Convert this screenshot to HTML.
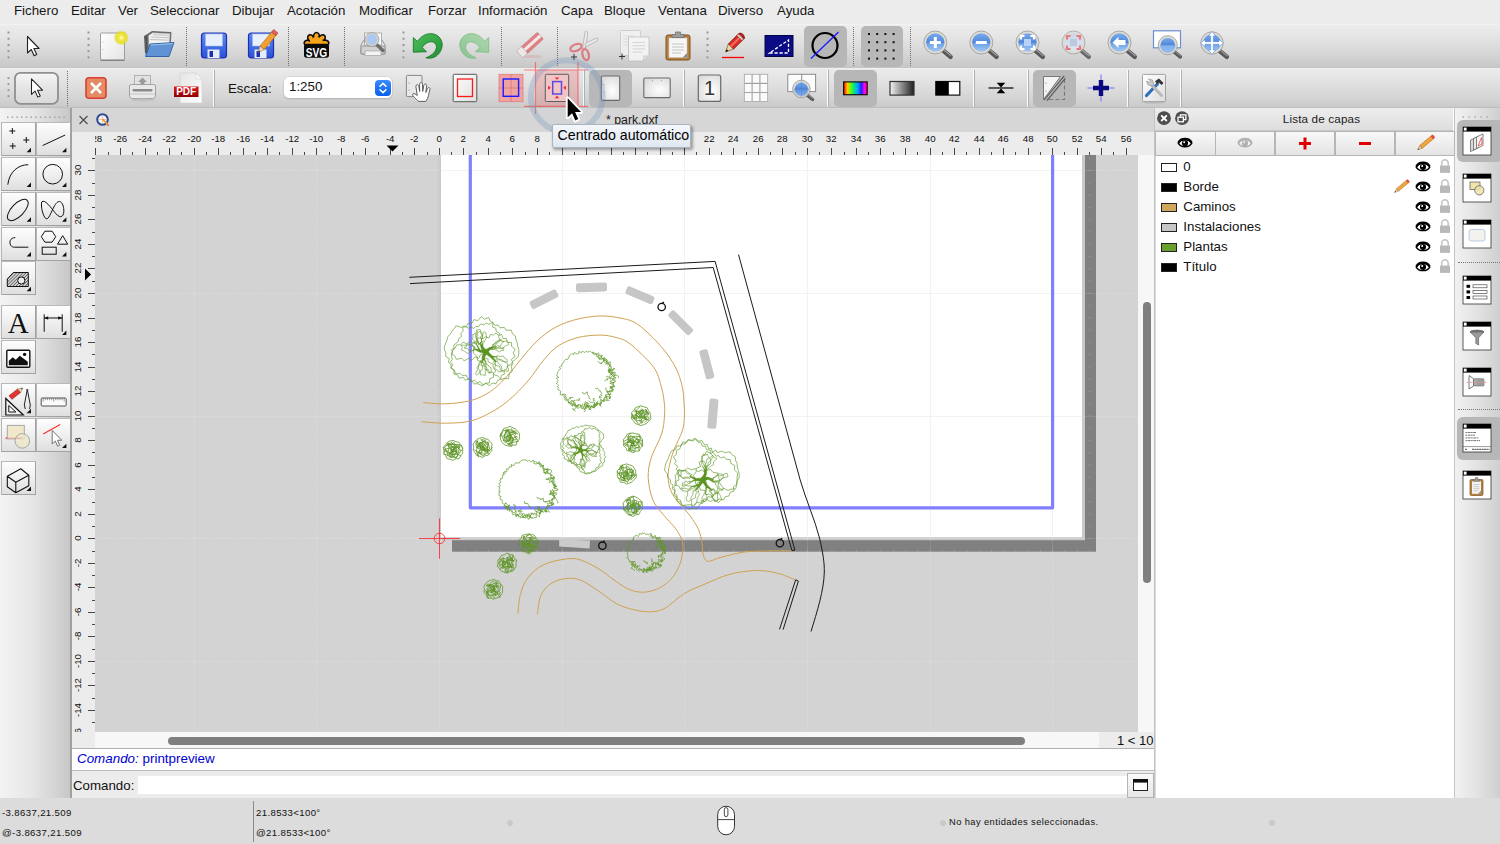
<!DOCTYPE html><html lang="es"><head><meta charset="utf-8"><title>park.dxf</title><style>
*{box-sizing:border-box;margin:0;padding:0}
html,body{width:1500px;height:844px;overflow:hidden;background:#dcdcdc;font-family:"Liberation Sans",sans-serif;color:#000}
.abs{position:absolute}
#root{position:relative;width:1500px;height:844px;overflow:hidden}
#menubar{left:0;top:0;width:1500px;height:24px;background:#ececec}
#menubar span{position:absolute;top:2px;font-size:13.3px;line-height:17px;color:#161616;white-space:nowrap}
#tb1{left:0;top:24px;width:1500px;height:44px;background:linear-gradient(#f6f6f6 0%,#ececec 3%,#e3e3e3 35%,#d4d4d4 72%,#c8c8c8 97%,#c2c2c2 100%)}
#tb2{left:0;top:68px;width:1500px;height:40px;background:linear-gradient(#f2f2f2 0%,#eaeaea 4%,#e2e2e2 35%,#d5d5d5 72%,#cbcbcb 96%,#b8b8b8 100%)}
#lefttb{left:0;top:108px;width:72px;height:690px;background:linear-gradient(90deg,#f3f3f3 0%,#e6e6e6 45%,#c8c8c8 96.5%,#9c9c9c 97.5%,#a4a4a4 100%)}
#tabbar{left:72px;top:108px;width:1082px;height:24px;background:#d6d6d6}
#rulerbg{left:72px;top:132px;width:1082px;height:617px;background:#ececec}
#canvas{left:95px;top:155px;width:1043px;height:577px;background:#d3d3d3;overflow:hidden}
#vscroll{left:1138px;top:155px;width:16px;height:577px;background:#f7f7f7}
#hscroll{left:95px;top:732px;width:1004px;height:17px;background:#f7f7f7}
#cmdhist{left:72px;top:748px;width:1081.5px;height:23px;background:#fff;border-top:1px solid #b0b0b0;border-bottom:1px solid #bcbcbc}
#cmdline{left:72px;top:771px;width:1083px;height:27px;background:#ececec}
#status{left:0;top:798px;width:1500px;height:46px;background:#dcdcdc}
#status span{position:absolute;font-size:9.6px;letter-spacing:0.37px;color:#111;white-space:nowrap;line-height:13px}
#layers{left:1154px;top:108px;width:301px;height:690px;background:#fff;border-left:1px solid #c4c4c4;border-right:1px solid #c4c4c4}
#rightdock{left:1455px;top:108px;width:45px;height:690px;background:linear-gradient(90deg,#f1f1f1 0%,#e4e4e4 45%,#cfcfcf 100%)}
.sepv{position:absolute;width:0;border-left:1px dotted #6e6e6e}
.sepline{position:absolute;width:2px;background:linear-gradient(90deg,#fcfcfc 50%,#b0b0b0 50%)}
.hl{position:absolute;background:#b7b7b7;border-radius:5px}
svg{position:absolute;overflow:visible;left:0;top:0}
svg text{font-family:"Liberation Sans",sans-serif}
.lbtn{position:absolute;background:linear-gradient(#fdfdfd 0%,#f1f1f1 45%,#dfdfdf 100%);border:1.2px solid #a2a2a2;border-top-color:#b9b9b9;border-left-color:#b4b4b4}
.lrow{position:absolute;left:0;width:298px;height:20px}
.lrow i{position:absolute;left:5.8px;top:5.5px;width:16.5px;height:9.4px;border:1px solid #222}
.lrow b{position:absolute;left:28.3px;top:1px;font-weight:normal;font-size:13.3px;line-height:18px;color:#111}
.lbt{position:absolute;top:23px;height:25px;background:linear-gradient(#f8f8f8,#e4e4e4);border:1.4px solid #b6b6b6}
</style></head><body><div id="root">
<div id="menubar" class="abs">
<span style="left:14px">Fichero</span>
<span style="left:71px">Editar</span>
<span style="left:118px">Ver</span>
<span style="left:150px">Seleccionar</span>
<span style="left:232px">Dibujar</span>
<span style="left:287px">Acotación</span>
<span style="left:359px">Modificar</span>
<span style="left:428px">Forzar</span>
<span style="left:478px">Información</span>
<span style="left:561px">Capa</span>
<span style="left:604px">Bloque</span>
<span style="left:658px">Ventana</span>
<span style="left:718px">Diverso</span>
<span style="left:777px">Ayuda</span>
</div>
<div id="tb1" class="abs"></div>
<div id="tb2" class="abs"></div>
<div class="hl" style="left:804px;top:26px;width:43px;height:41px"></div>
<div class="hl" style="left:861px;top:26px;width:42px;height:41px"></div>
<div class="hl" style="left:589px;top:70px;width:43px;height:37px"></div>
<div class="hl" style="left:834px;top:70px;width:43px;height:37px"></div>
<div class="hl" style="left:1033px;top:70px;width:43px;height:37px"></div>
<svg width="4" height="30" style="left:7px;top:31px"><path d="M1.5 0.6 V28" stroke="#929292" stroke-width="1.9" stroke-dasharray="1.9 4.3"/></svg>
<svg width="4" height="30" style="left:87px;top:31px"><path d="M1.5 0.6 V28" stroke="#929292" stroke-width="1.9" stroke-dasharray="1.9 4.3"/></svg>
<svg width="4" height="30" style="left:402px;top:31px"><path d="M1.5 0.6 V28" stroke="#929292" stroke-width="1.9" stroke-dasharray="1.9 4.3"/></svg>
<svg width="4" height="30" style="left:706px;top:31px"><path d="M1.5 0.6 V28" stroke="#929292" stroke-width="1.9" stroke-dasharray="1.9 4.3"/></svg>
<div class="sepv" style="left:186px;top:27px;height:39px"></div>
<div class="sepv" style="left:288px;top:27px;height:39px"></div>
<div class="sepv" style="left:344px;top:27px;height:39px"></div>
<div class="sepv" style="left:501px;top:27px;height:39px"></div>
<div class="sepv" style="left:557px;top:27px;height:39px"></div>
<div class="sepv" style="left:853px;top:27px;height:39px"></div>
<div class="sepv" style="left:910px;top:27px;height:39px"></div>
<svg width="4" height="30" style="left:7px;top:76px"><path d="M1.5 1.2 V24" stroke="#929292" stroke-width="1.9" stroke-dasharray="1.9 4.1"/></svg>
<div class="sepv" style="left:67px;top:71px;height:35px"></div>
<div class="sepline" style="left:213px;top:70px;height:37px"></div>
<div class="sepline" style="left:583px;top:70px;height:37px"></div>
<div class="sepline" style="left:683px;top:70px;height:37px"></div>
<div class="sepline" style="left:827px;top:70px;height:37px"></div>
<div class="sepline" style="left:973px;top:70px;height:37px"></div>
<div class="sepline" style="left:1027px;top:70px;height:37px"></div>
<div class="sepline" style="left:1127px;top:70px;height:37px"></div>
<div class="sepline" style="left:1180px;top:70px;height:37px"></div>
<svg width="1500" height="110" viewBox="0 0 1500 110"><defs><linearGradient id="lensg" x1="0" y1="0" x2="0" y2="1"><stop offset="0" stop-color="#7fb0ee"/><stop offset="0.5" stop-color="#4f86d9"/><stop offset="0.55" stop-color="#6fa2e6"/><stop offset="1" stop-color="#a9cbf5"/></linearGradient><linearGradient id="lensp" x1="0" y1="0" x2="0" y2="1"><stop offset="0" stop-color="#c6d4ea"/><stop offset="1" stop-color="#dfe8f5"/></linearGradient></defs><defs><linearGradient id="pgr" x1="0" y1="0" x2="1" y2="1"><stop offset="0" stop-color="#ffffff"/><stop offset="1" stop-color="#dedede"/></linearGradient><radialGradient id="pgc" cx="0.6" cy="0.6" r="0.7"><stop offset="0" stop-color="#ffffff"/><stop offset="1" stop-color="#dcdcdc"/></radialGradient></defs><g transform="translate(33.5,46.5)" ><g transform="translate(-6,-10)"><path transform="scale(1.0)" d="M0 0 L0 16.5 L3.8 13 L6.6 19.3 L9.2 18.1 L6.4 12 L11.6 12 Z" fill="#fff" stroke="#222" stroke-width="1.1" stroke-linejoin="round" /></g></g><g transform="translate(112,45)" ><defs><radialGradient id="glow"><stop offset="0" stop-color="#fffde0"/><stop offset="0.35" stop-color="#f2ea3a"/><stop offset="0.75" stop-color="#e6dc28" stop-opacity="0.85"/><stop offset="1" stop-color="#e0d820" stop-opacity="0"/></radialGradient><linearGradient id="pg" x1="0" y1="0" x2="1" y2="1"><stop offset="0" stop-color="#ffffff"/><stop offset="1" stop-color="#e4e4e4"/></linearGradient></defs><rect x="-11.5" y="-12" width="24" height="27" rx="1" fill="url(#pg)" stroke="#9e9e9e" stroke-width="1"/><path d="M-11.5 15.3 H12.5" stroke="#777" stroke-width="1"/><circle cx="-9" cy="-3" r="0.45" fill="#999"/><circle cx="-9" cy="4.5" r="0.45" fill="#999"/><circle cx="9.3" cy="-7.2" r="7.6" fill="url(#glow)"/></g><g transform="translate(158,45)" ><path d="M-14 -9 L-11 -10.5 L-11 10 L-13 8 Z" fill="#5a5a5a"/><path d="M-11.5 -10 L-6 -13.5 L13 -12.5 L12 3 L-11 9 Z" fill="#6a6a6a" stroke="#4a4a4a" stroke-width="0.7"/><path d="M-9.5 -9.5 L-5.5 -12.3 L12 -11.5 L11.5 -2 L-9 6 Z" fill="#f2f2f2" stroke="#9a9a9a" stroke-width="0.6"/><path d="M-5 -10.3 L11.5 -9.6 M-7 -8 L11.5 -7.3 M-8 -5.5 L11.5 -4.8" stroke="#b9b9b9" stroke-width="0.9"/><path d="M-12.5 11.5 L-8 -1 L16 -2.5 L11 11.5 Z" fill="#5f93d4" stroke="#3565a8" stroke-width="1"/><path d="M-7.3 0 L15 -1.4" stroke="#9fc3ec" stroke-width="1"/></g><g transform="translate(214,45.5)" ><defs><linearGradient id="fl" x1="0" y1="0" x2="0" y2="1"><stop offset="0" stop-color="#5f8cf0"/><stop offset="1" stop-color="#2a52d8"/></linearGradient></defs><rect x="-12.5" y="-12.5" width="25" height="25" rx="3" fill="url(#fl)" stroke="#1c2fb0" stroke-width="1.2"/><rect x="-8.5" y="-11.5" width="17" height="12" fill="#e8f0ff" stroke="#9db8f0" stroke-width="0.6"/><rect x="-6.5" y="4" width="12" height="8.5" fill="#e6ecfa"/><rect x="-4.5" y="5.5" width="3.5" height="6" fill="#1c2fb0"/></g><g transform="translate(261,45.5)" ><defs><linearGradient id="fl" x1="0" y1="0" x2="0" y2="1"><stop offset="0" stop-color="#5f8cf0"/><stop offset="1" stop-color="#2a52d8"/></linearGradient></defs><rect x="-12.5" y="-12.5" width="25" height="25" rx="3" fill="url(#fl)" stroke="#1c2fb0" stroke-width="1.2"/><rect x="-8.5" y="-11.5" width="17" height="12" fill="#e8f0ff" stroke="#9db8f0" stroke-width="0.6"/><rect x="-6.5" y="4" width="12" height="8.5" fill="#e6ecfa"/><rect x="-4.5" y="5.5" width="3.5" height="6" fill="#1c2fb0"/><g transform="rotate(40 6 -4)"><rect x="3.5" y="-16" width="5.5" height="20" fill="#f0a030" stroke="#b86a10" stroke-width="0.6"/><rect x="3.5" y="-17.5" width="5.5" height="3.5" fill="#e06060" stroke="#a03030" stroke-width="0.5"/><path d="M3.5 4 L6.25 10 L9 4 Z" fill="#f0d8b0" stroke="#8a6a40" stroke-width="0.5"/><path d="M5.4 8 L6.25 10 L7.1 8 Z" fill="#333"/></g></g><g transform="translate(316,46)" ><g transform="translate(0.5,0)"><g fill="#f7a41d" stroke="#0a0a0a" stroke-width="1.7"><ellipse cx="0" cy="-8.6" rx="3.1" ry="4.9" transform="rotate(-78 0 -1)"/><ellipse cx="0" cy="-8.6" rx="3.1" ry="4.9" transform="rotate(-39 0 -1)"/><ellipse cx="0" cy="-8.6" rx="3.1" ry="4.9" transform="rotate(0 0 -1)"/><ellipse cx="0" cy="-8.6" rx="3.1" ry="4.9" transform="rotate(39 0 -1)"/><ellipse cx="0" cy="-8.6" rx="3.1" ry="4.9" transform="rotate(78 0 -1)"/></g><circle cx="0" cy="-1.5" r="7.4" fill="#f7a41d"/><rect x="-12.5" y="-2.3" width="25" height="14" rx="2.6" fill="#0a0a0a"/><text x="0" y="10.8" text-anchor="middle" font-size="12.6" font-weight="bold" fill="#fff" textLength="21.5" lengthAdjust="spacingAndGlyphs">SVG</text></g></g><g transform="translate(373,45)" ><path d="M-12 0 L-9 -5 H9 L12 0 V9 H-12 Z" fill="#e4e4e4" stroke="#8c8c8c" stroke-width="0.9"/><rect x="-12" y="1" width="24" height="8" rx="1.5" fill="#d2d2d2" stroke="#8c8c8c" stroke-width="0.9"/><rect x="-8.5" y="-12" width="17" height="12" fill="#fafafa" stroke="#a0a0a0" stroke-width="0.8"/><rect x="-8" y="6" width="16" height="4.5" fill="#f4f4f4" stroke="#9a9a9a" stroke-width="0.6"/><path d="M3 -1 L10 5.5" stroke="#6e6e6e" stroke-width="3.5" stroke-linecap="round"/><circle cx="-1" cy="-5.5" r="6" fill="#a9c9f2" stroke="#d0d0d0" stroke-width="1.8"/><circle cx="-1" cy="-5.5" r="7" fill="none" stroke="#8e8e8e" stroke-width="0.6"/></g><g transform="translate(428,45.5)" ><defs><linearGradient id="ug1" x1="0" y1="0" x2="1" y2="1"><stop offset="0" stop-color="#4fbf5b"/><stop offset="1" stop-color="#1f8f33"/></linearGradient></defs><g transform="" opacity="1.0"><path d="M-14.7 -7.9 L-14.7 6.7 L-1.5 6.2 L-5.9 2.1 C-3 -2.5 2 -5 5.9 -3.1 C9.5 -1 9.5 4.5 4.4 8.7 C2 10.5 0 11.5 -2.2 12.3 C3 13.5 7.5 12 10.5 8.5 C14.5 4 15 -2 13.2 -5.3 C11 -10 7 -11.8 2.5 -11.8 C-2.5 -11.8 -7 -9 -10.6 -4.1 Z" fill="url(#ug1)" stroke="#167a28" stroke-width="0.9" stroke-linejoin="round"/></g></g><g transform="translate(474,45.5)" ><defs><linearGradient id="ug2" x1="0" y1="0" x2="1" y2="1"><stop offset="0" stop-color="#a5d6a7"/><stop offset="1" stop-color="#7cc083"/></linearGradient></defs><g transform="scale(-1,1)" opacity="0.85"><path d="M-14.7 -7.9 L-14.7 6.7 L-1.5 6.2 L-5.9 2.1 C-3 -2.5 2 -5 5.9 -3.1 C9.5 -1 9.5 4.5 4.4 8.7 C2 10.5 0 11.5 -2.2 12.3 C3 13.5 7.5 12 10.5 8.5 C14.5 4 15 -2 13.2 -5.3 C11 -10 7 -11.8 2.5 -11.8 C-2.5 -11.8 -7 -9 -10.6 -4.1 Z" fill="url(#ug2)" stroke="#6fb878" stroke-width="0.9" stroke-linejoin="round"/></g></g><g transform="translate(530,45)" ><g opacity="0.62"><ellipse cx="2" cy="11.5" rx="10" ry="1.6" fill="#d9b0b0"/><g transform="rotate(-42)"><rect x="-14" y="-4.6" width="28" height="9.2" rx="1.2" fill="#e0474f" stroke="#c0353d" stroke-width="0.6"/><rect x="-8" y="-1.6" width="22" height="3.2" fill="#fbeeee"/><rect x="-14" y="-4.6" width="6.5" height="9.2" rx="1.2" fill="#f7f3f3" stroke="#bdb4b4" stroke-width="0.6"/></g></g></g><g transform="translate(583,45)" ><g opacity="0.62"><path d="M-0.5 3.5 L2.2 -13.5 Q3.6 -14.6 4.6 -13.2 L3.2 2.2 Z" fill="#f2f2f2" stroke="#8e8e8e" stroke-width="0.8"/><path d="M2 -1.5 L14.2 -7.2 Q15.2 -5.4 14.4 -4.2 L2.6 1.8 Z" fill="#f2f2f2" stroke="#8e8e8e" stroke-width="0.8"/><ellipse cx="-7" cy="2.6" rx="6" ry="3.3" transform="rotate(-22 -7 2.6)" fill="none" stroke="#dc4850" stroke-width="2.3"/><ellipse cx="2.6" cy="9.6" rx="3.1" ry="5.6" transform="rotate(-14 2.6 9.6)" fill="none" stroke="#dc4850" stroke-width="2.3"/></g><path d="M-12 12 H-6 M-9 9 V15" stroke="#333" stroke-width="1"/></g><g transform="translate(632,45)" ><g opacity="0.8"><rect x="-11.5" y="-14.5" width="20" height="25" rx="1" fill="#f3f3f3" stroke="#c4c4c4" stroke-width="0.9"/><path d="M-9 -9 H2 M-9 -6 H2 M-9 -3 H2 M-9 0 H2" stroke="#d4d4d4" stroke-width="0.8"/><path d="M-3.5 -8 H17 V11 L11.5 16 H-3.5 Z" fill="#f9f9f9" stroke="#bcbcbc" stroke-width="0.9"/><path d="M17 11 H11.5 V16 Z" fill="#e2e2e2" stroke="#bcbcbc" stroke-width="0.6"/><path d="M0.5 -2.5 H13 M0.5 0.7 H13 M0.5 3.9 H13 M0.5 7.1 H10" stroke="#cfcfcf" stroke-width="0.9"/></g><path d="M-13 11.5 H-7 M-10 8.5 V14.5" stroke="#333" stroke-width="1"/></g><g transform="translate(678,45)" ><rect x="-12" y="-10" width="24" height="25" rx="2" fill="#b5813d" stroke="#7d5520" stroke-width="1"/><rect x="-9" y="-7" width="18" height="19.5" fill="#f6f6f6" stroke="#c9c9c9" stroke-width="0.6"/><path d="M-6 -1 H6 M-6 2 H6 M-6 5 H6 M-6 8 H3" stroke="#bdbdbd" stroke-width="0.9"/><path d="M-6 -7.5 V-10.5 H-2.5 V-13 H2.5 V-10.5 H6 V-7.5 Z" fill="#9c9c9c" stroke="#6a6a6a" stroke-width="0.7"/><path d="M9 8 V12.5 H4.5 Z" fill="#8a8a8a"/></g><g transform="translate(732,44.5)" ><g transform="translate(1,0) rotate(45)"><rect x="-3.6" y="-12.5" width="7.2" height="15.5" fill="#e02a22" stroke="#7c120d" stroke-width="0.8"/><rect x="-1.2" y="-12.5" width="2" height="15.5" fill="#f26a60"/><path d="M-3.6 -12.5 Q0 -16 3.6 -12.5 Z" fill="#e02a22" stroke="#7c120d" stroke-width="0.8"/><rect x="-3.6" y="-11.3" width="7.2" height="2.2" fill="#d9d9d9" stroke="#7c120d" stroke-width="0.4"/><path d="M-3.6 3 L0 10.5 L3.6 3 Z" fill="#efd3a7" stroke="#6b4a24" stroke-width="0.6"/><path d="M-1.3 7.8 L0 10.5 L1.3 7.8 Z" fill="#111"/></g><path d="M-10 13 H12" stroke="#f00" stroke-width="1.3"/></g><g transform="translate(779,46)" ><rect x="-14" y="-10.5" width="28" height="21" fill="#0b0b86" stroke="#05054a" stroke-width="1"/><path d="M-9.5 7 H9.5 V-6 Z" fill="none" stroke="#fff" stroke-width="1.3" stroke-dasharray="3.2 1.8"/></g><g transform="translate(825,45.5)" ><circle cx="0" cy="0" r="12.5" fill="none" stroke="#000" stroke-width="2.2"/><path d="M-14 13 L13.5 -13.5" stroke="#1a1aff" stroke-width="1.3"/></g><g transform="translate(881,46)" ><rect x="-13.0" y="-13.0" width="2" height="2" fill="#111"/><rect x="-13.0" y="-4.8" width="2" height="2" fill="#111"/><rect x="-13.0" y="3.4" width="2" height="2" fill="#111"/><rect x="-13.0" y="11.6" width="2" height="2" fill="#111"/><rect x="-4.8" y="-13.0" width="2" height="2" fill="#111"/><rect x="-4.8" y="-4.8" width="2" height="2" fill="#111"/><rect x="-4.8" y="3.4" width="2" height="2" fill="#111"/><rect x="-4.8" y="11.6" width="2" height="2" fill="#111"/><rect x="3.4" y="-13.0" width="2" height="2" fill="#111"/><rect x="3.4" y="-4.8" width="2" height="2" fill="#111"/><rect x="3.4" y="3.4" width="2" height="2" fill="#111"/><rect x="3.4" y="11.6" width="2" height="2" fill="#111"/><rect x="11.6" y="-13.0" width="2" height="2" fill="#111"/><rect x="11.6" y="-4.8" width="2" height="2" fill="#111"/><rect x="11.6" y="3.4" width="2" height="2" fill="#111"/><rect x="11.6" y="11.6" width="2" height="2" fill="#111"/></g><g transform="translate(937.3,45.5)" ><g opacity="1"><path d="M5.2 4.6 L13.2 11.2" stroke="#585858" stroke-width="4.6" stroke-linecap="round"/><path d="M7.0 4.8 L13.6 10.2" stroke="#9a9a9a" stroke-width="1.2" stroke-linecap="round"/><circle cx="-2" cy="-3" r="10.3" fill="url(#lensg)" stroke="#dedbd2" stroke-width="2.2"/><circle cx="-2" cy="-3" r="11.5" fill="none" stroke="#8e8e8e" stroke-width="0.7"/><path d="M-7.5 -3 H3.5 M-2 -8.5 V2.5" stroke="#fff" stroke-width="3"/></g></g><g transform="translate(983.3,45.5)" ><g opacity="1"><path d="M5.2 4.6 L13.2 11.2" stroke="#585858" stroke-width="4.6" stroke-linecap="round"/><path d="M7.0 4.8 L13.6 10.2" stroke="#9a9a9a" stroke-width="1.2" stroke-linecap="round"/><circle cx="-2" cy="-3" r="10.3" fill="url(#lensg)" stroke="#dedbd2" stroke-width="2.2"/><circle cx="-2" cy="-3" r="11.5" fill="none" stroke="#8e8e8e" stroke-width="0.7"/><path d="M-7.5 -3 H3.5" stroke="#fff" stroke-width="3"/></g></g><g transform="translate(1029.5,45.5)" ><g opacity="1"><path d="M5.2 4.6 L13.2 11.2" stroke="#585858" stroke-width="4.6" stroke-linecap="round"/><path d="M7.0 4.8 L13.6 10.2" stroke="#9a9a9a" stroke-width="1.2" stroke-linecap="round"/><circle cx="-2" cy="-3" r="10.3" fill="url(#lensg)" stroke="#dedbd2" stroke-width="2.2"/><circle cx="-2" cy="-3" r="11.5" fill="none" stroke="#8e8e8e" stroke-width="0.7"/><rect x="-5.5" y="-6.5" width="7" height="7" fill="#b9d2f5"/><path d="M-8.5 -6 V-9.5 H-5 M1 -9.5 H4.5 V-6 M4.5 0 V3.5 H1 M-5 3.5 H-8.5 V0" stroke="#fff" stroke-width="2.2" fill="none"/></g></g><g transform="translate(1075.5,45.5)" ><g opacity="0.85"><path d="M5.2 4.6 L13.2 11.2" stroke="#585858" stroke-width="4.6" stroke-linecap="round"/><path d="M7.0 4.8 L13.6 10.2" stroke="#9a9a9a" stroke-width="1.2" stroke-linecap="round"/><circle cx="-2" cy="-3" r="10.3" fill="url(#lensp)" stroke="#dedbd2" stroke-width="2.2"/><circle cx="-2" cy="-3" r="11.5" fill="none" stroke="#8e8e8e" stroke-width="0.7"/><rect x="-5.5" y="-6.5" width="7" height="7" fill="#b9c4dc"/><path d="M-8.5 -6 V-9.5 H-5 M1 -9.5 H4.5 V-6 M4.5 0 V3.5 H1 M-5 3.5 H-8.5 V0" stroke="#e8696e" stroke-width="2.2" fill="none"/></g></g><g transform="translate(1121.5,45.5)" ><g opacity="1"><path d="M5.2 4.6 L13.2 11.2" stroke="#585858" stroke-width="4.6" stroke-linecap="round"/><path d="M7.0 4.8 L13.6 10.2" stroke="#9a9a9a" stroke-width="1.2" stroke-linecap="round"/><circle cx="-2" cy="-3" r="10.3" fill="url(#lensg)" stroke="#dedbd2" stroke-width="2.2"/><circle cx="-2" cy="-3" r="11.5" fill="none" stroke="#8e8e8e" stroke-width="0.7"/><path d="M-9 -3 L-3 -8.5 V-5.5 H4 V-0.5 H-3 V2.5 Z" fill="#fff"/></g></g><g transform="translate(1168,46)" ><rect x="-14.5" y="-15.2" width="27" height="17" fill="#fff" stroke="#6c8fd0" stroke-width="1.2"/><g opacity="1"><path d="M5.7 5.4 L12.2 10.8" stroke="#585858" stroke-width="3.8" stroke-linecap="round"/><path d="M7.1 5.6 L12.5 10.0" stroke="#9a9a9a" stroke-width="1.0" stroke-linecap="round"/><circle cx="-0.2" cy="-0.8" r="8.4" fill="url(#lensg)" stroke="#dedbd2" stroke-width="2.2"/><circle cx="-0.2" cy="-0.8" r="9.6" fill="none" stroke="#8e8e8e" stroke-width="0.7"/><path d="M-8.2 -0.8 A8 8 0 0 0 7.8 -0.8 Z" fill="#8db8ee" opacity="0.7"/></g></g><g transform="translate(1213,45)" ><g opacity="1"><path d="M6.0 5.4 L13.8 11.8" stroke="#585858" stroke-width="4.5" stroke-linecap="round"/><path d="M7.7 5.6 L14.1 10.8" stroke="#9a9a9a" stroke-width="1.2" stroke-linecap="round"/><circle cx="-1" cy="-2" r="10" fill="url(#lensg)" stroke="#dedbd2" stroke-width="2.2"/><circle cx="-1" cy="-2" r="11.2" fill="none" stroke="#8e8e8e" stroke-width="0.7"/><path d="M-1 -13.5 L2.5 -9 H0.3 V-3.3 H6 V-5.5 L10.5 -2 L6 1.5 V-0.7 H0.3 V5 H2.5 L-1 9.5 L-4.5 5 H-2.3 V-0.7 H-8 V1.5 L-12.5 -2 L-8 -5.5 V-3.3 H-2.3 V-9 H-4.5 Z" fill="#fff" stroke="#5d8fd8" stroke-width="0.6"/></g></g><g transform="translate(36.5,88.3)" ><defs><linearGradient id="sb" x1="0" y1="0" x2="0" y2="1"><stop offset="0" stop-color="#f6f6f6"/><stop offset="0.5" stop-color="#e4e4e4"/><stop offset="1" stop-color="#dadada"/></linearGradient></defs><rect x="-21.5" y="-15.5" width="43" height="31" rx="5.5" fill="url(#sb)" stroke="#8f8f8f" stroke-width="1.8"/><g transform="translate(-5,-9.5)"><path transform="scale(0.95)" d="M0 0 L0 16.5 L3.8 13 L6.6 19.3 L9.2 18.1 L6.4 12 L11.6 12 Z" fill="#fff" stroke="#222" stroke-width="1.1" stroke-linejoin="round" /></g></g><g transform="translate(96,88)" ><rect x="-10" y="-10.2" width="20" height="20.4" rx="3" fill="#e48b63" stroke="#d8402f" stroke-width="1.6"/><path d="M-5 -5 L5 5 M5 -5 L-5 5" stroke="#fff" stroke-width="2.6" stroke-linecap="butt"/></g><g transform="translate(142.5,88)" ><rect x="-8" y="-12.5" width="16" height="12" fill="#e2e2e2" stroke="#a6a6a6" stroke-width="0.8"/><path d="M0 -10.5 L4.5 -6 H2 V-2 H-2 V-6 H-4.5 Z" fill="#9b9b9b"/><path d="M-13 -2 Q-13 -3.5 -11 -3.5 H11 Q13 -3.5 13 -2 V8 Q13 10.5 10 10.5 H-10 Q-13 10.5 -13 8 Z" fill="#e9e9e9" stroke="#9a9a9a" stroke-width="0.9"/><rect x="-10" y="1" width="20" height="2.6" rx="1" fill="#8a8a8a"/><path d="M-12.5 6 H12.5" stroke="#c4c4c4" stroke-width="1"/><ellipse cx="0" cy="12" rx="12" ry="1.5" fill="#bdbdbd" opacity="0.8"/></g><g transform="translate(187,88)" ><defs><linearGradient id="pdfp" x1="0" y1="0" x2="1" y2="1"><stop offset="0" stop-color="#e4e4e4"/><stop offset="1" stop-color="#ffffff"/></linearGradient><linearGradient id="pdfr" x1="0" y1="0" x2="0" y2="1"><stop offset="0" stop-color="#e01818"/><stop offset="1" stop-color="#8c0000"/></linearGradient></defs><path d="M-7 -15 H9 L15 -9 V15 H-7 Z" fill="url(#pdfp)" stroke="#d0d0d0" stroke-width="0.6"/><path d="M9 -15 V-9 H15 Z" fill="#f6f6f6" stroke="#d0d0d0" stroke-width="0.5"/><rect x="-13" y="-1.5" width="24.5" height="10.5" fill="url(#pdfr)"/><text x="-0.8" y="7.3" text-anchor="middle" font-size="10.5" font-weight="bold" fill="#fff" textLength="20" lengthAdjust="spacingAndGlyphs">PDF</text></g><g transform="translate(418,88)" ><rect x="-11.6" y="-12.6" width="15.6" height="21.2" rx="1" fill="#e9e9e9" stroke="#7a7a7a" stroke-width="0.9"/><circle cx="-9" cy="-5" r="0.5" fill="#666"/><circle cx="-9" cy="2" r="0.5" fill="#666"/><g transform="translate(2.6,1.6) scale(1.12)"><path d="M-2 10.5 C-4 8 -8 5.5 -7 4 C-6 2.8 -4 4.2 -3 5.4 L-4.2 -2.8 C-4.3 -4.8 -2 -4.9 -1.6 -2.9 L-0.8 1.6 L-0.9 -4.8 C-0.8 -6.8 1.6 -6.7 1.7 -4.7 L1.9 1.6 L2.9 -3.8 C3.3 -5.7 5.5 -5.2 5.3 -3.3 L4.7 2.6 L6.2 -1 C7 -2.6 8.9 -1.7 8.3 0 C7.1 3.6 7.4 7 4.6 10.5 Z" fill="#fff" stroke="#555" stroke-width="0.85" stroke-linejoin="round"/></g></g><g transform="translate(465,88)" ><rect x="-11.8" y="-13.7" width="23.6" height="27.4" rx="1" fill="url(#pgr)" stroke="#555" stroke-width="1"/><rect x="-7.5" y="-9" width="15" height="17.5" fill="none" stroke="#ff1a1a" stroke-width="1.3"/></g><g transform="translate(511,88)" ><rect x="-12" y="-13.7" width="24" height="27.4" fill="#f0a3a3" stroke="#e07f7f" stroke-width="0.8"/><path d="M0 -13.7 V13.7 M-12 0 H12" stroke="#d97c7c" stroke-width="0.9"/><rect x="-7.8" y="-9" width="15.4" height="17.3" fill="none" stroke="#1a1aff" stroke-width="1.4"/></g><g transform="translate(610.5,88.2)" ><rect x="-9.2" y="-12.2" width="18.4" height="24.4" rx="1.2" fill="url(#pgc)" stroke="#6a6a6a" stroke-width="1.1"/><circle cx="-6.5" cy="-3.5" r="0.45" fill="#555"/><circle cx="-6.5" cy="4" r="0.45" fill="#555"/></g><g transform="translate(657,87.8)" ><rect x="-13.2" y="-9.8" width="26.4" height="19.6" rx="1.2" fill="url(#pgc)" stroke="#6a6a6a" stroke-width="1.1"/><circle cx="-4.5" cy="-7" r="0.45" fill="#555"/><circle cx="4.5" cy="-7" r="0.45" fill="#555"/></g><g transform="translate(709.5,88.2)" ><rect x="-11.2" y="-13.2" width="22.4" height="26.4" rx="2" fill="url(#pgc)" stroke="#6a6a6a" stroke-width="1.2"/><text x="0" y="7.2" text-anchor="middle" font-size="20" fill="#333">1</text></g><g transform="translate(756,88)" ><rect x="-11.6" y="-13.7" width="23.2" height="27.2" fill="#fafafa" stroke="#b4b4b4" stroke-width="1"/><path d="M-3.9 -13.7 V13.5 M3.9 -13.7 V13.5 M-11.6 -4.6 H11.6 M-11.6 4.5 H11.6" stroke="#a2a2a2" stroke-width="1.1"/></g><g transform="translate(801,88)" ><rect x="-13.2" y="-13.7" width="27.8" height="17.3" fill="#fcfcfc" stroke="#8c8c8c" stroke-width="1"/><path d="M0.7 -13.7 V3.6" stroke="#8c8c8c" stroke-width="1"/><g opacity="1"><path d="M5.7 6.6 L11.6 11.5" stroke="#585858" stroke-width="3.4" stroke-linecap="round"/><path d="M7.0 6.8 L11.9 10.7" stroke="#9a9a9a" stroke-width="0.9" stroke-linecap="round"/><circle cx="0.4" cy="1" r="7.6" fill="url(#lensg)" stroke="#dedbd2" stroke-width="2.2"/><circle cx="0.4" cy="1" r="8.799999999999999" fill="none" stroke="#8e8e8e" stroke-width="0.7"/><path d="M-7.2 1 H8 M0.4 -6.6 V8.6" stroke="#4b7ecf" stroke-width="0.6" opacity="0.7"/><path d="M-7.2 1 A7.6 7.6 0 0 0 8 1 Z" fill="#3f78d0" opacity="0.35"/></g></g><g transform="translate(855.4,88.3)" ><defs><linearGradient id="rb" x1="0" y1="0" x2="1" y2="0"><stop offset="0" stop-color="#ff0000"/><stop offset="0.17" stop-color="#ffd000"/><stop offset="0.3" stop-color="#60ff00"/><stop offset="0.45" stop-color="#00e090"/><stop offset="0.6" stop-color="#00a0ff"/><stop offset="0.75" stop-color="#2020ff"/><stop offset="0.88" stop-color="#ff00ff"/><stop offset="1" stop-color="#ff0060"/></linearGradient></defs><rect x="-11.8" y="-6.4" width="23.6" height="12.8" fill="url(#rb)" stroke="#111" stroke-width="1.2"/></g><g transform="translate(902,88.3)" ><defs><linearGradient id="gg" x1="0" y1="0" x2="1" y2="0"><stop offset="0" stop-color="#f4f4f4"/><stop offset="1" stop-color="#202020"/></linearGradient></defs><rect x="-12" y="-6.8" width="24" height="13.6" fill="url(#gg)" stroke="#333" stroke-width="1.2"/></g><g transform="translate(947.8,88.3)" ><rect x="-12" y="-6.8" width="24" height="13.6" fill="#fff" stroke="#111" stroke-width="1.2"/><rect x="-12" y="-6.8" width="13" height="13.6" fill="#000"/></g><g transform="translate(1001,88)" ><path d="M-12.5 0 H12.5" stroke="#000" stroke-width="1.2"/><path d="M-4.3 -5.2 H4.3 L0 -0.4 Z M-4.3 5.2 H4.3 L0 0.4 Z" fill="#000"/></g><g transform="translate(1054,88)" ><path d="M-10.5 -11.5 H6.5 L-10.5 11.5 Z" fill="#f4f4f4" stroke="#777" stroke-width="1"/><path d="M10.5 -9 V11.5 H-7.5" fill="none" stroke="#777" stroke-width="1.1" stroke-dasharray="4 2.4"/><path d="M-9.8 12 L10.3 -12.2 M-7 12.6 L11.3 -9.6" stroke="#555" stroke-width="1.1"/><circle cx="-8" cy="-5" r="0.5" fill="#666"/><circle cx="-8" cy="3" r="0.5" fill="#666"/></g><g transform="translate(1101,88)" ><path d="M-13.5 0 H13.5 M0 -13.5 V13.5" stroke="#6f6fff" stroke-width="1"/><path d="M-8 0 H8 M0 -8 V8" stroke="#0a0a80" stroke-width="4.4"/></g><g transform="translate(1154,88)" ><rect x="-11.5" y="-13.6" width="23" height="27.2" rx="1" fill="url(#pgr)" stroke="#9a9a9a" stroke-width="0.9"/><ellipse cx="0" cy="14.5" rx="11" ry="1.2" fill="#b0b0b0" opacity="0.7"/><path d="M-7.5 7.5 L3.5 -4" stroke="#2f6fbf" stroke-width="3.2" stroke-linecap="round"/><path d="M1 -6.8 L5 -9.5 L9.5 -5 L7.5 -3 L4.8 -5.6 L3 -4 Z" fill="#333"/><path d="M7.5 7.5 L-1.5 -2" stroke="#b9b9b9" stroke-width="3" stroke-linecap="round"/><path d="M-1.5 -2 L-5.8 -3 L-7.4 -7 L-4.8 -5.6 L-3.4 -7 L-5.6 -9 L-1.6 -8 L-0.2 -4 Z" fill="#c9c9c9" stroke="#8a8a8a" stroke-width="0.6"/></g></svg>
<div class="abs" style="left:228px;top:80px;font-size:13.3px;line-height:17px;color:#111">Escala:</div>
<div class="abs" style="left:284px;top:77px;width:108px;height:21px;background:#fff;border-radius:5px;box-shadow:0 0 0 0.5px #c8c8c8,0 1px 1.5px rgba(0,0,0,.25)"><span class="abs" style="left:5px;top:1px;font-size:13.3px;line-height:17px;color:#111">1:250</span><div class="abs" style="right:1px;top:2.5px;width:16px;height:16px;border-radius:4px;background:linear-gradient(#3a8bff,#0a5fe8)"></div><svg width="16" height="16" style="left:91px;top:2.5px"><path d="M5 6.3 L8 3.4 L11 6.3 M5 9.7 L8 12.6 L11 9.7" fill="none" stroke="#fff" stroke-width="1.5" stroke-linecap="round" stroke-linejoin="round"/></svg></div>
<div id="lefttb" class="abs">
<svg width="72" height="12" style="left:0;top:0"><path d="M7 9.3 H66" stroke="#a0a0a0" stroke-width="1.4" stroke-dasharray="1.4 3.3"/></svg>
<div class="lbtn" style="left:1.0px;top:14.4px;width:34.8px;height:34.1px"></div>
<div class="lbtn" style="left:36.4px;top:14.4px;width:34.8px;height:34.1px"></div>
<div class="lbtn" style="left:1.0px;top:49.1px;width:34.8px;height:34.1px"></div>
<div class="lbtn" style="left:36.4px;top:49.1px;width:34.8px;height:34.1px"></div>
<div class="lbtn" style="left:1.0px;top:83.9px;width:34.8px;height:34.1px"></div>
<div class="lbtn" style="left:36.4px;top:83.9px;width:34.8px;height:34.1px"></div>
<div class="lbtn" style="left:1.0px;top:118.6px;width:34.8px;height:34.1px"></div>
<div class="lbtn" style="left:36.4px;top:118.6px;width:34.8px;height:34.1px"></div>
<div class="lbtn" style="left:1.0px;top:153.4px;width:34.8px;height:34.1px"></div>
<div class="lbtn" style="left:1.0px;top:197.2px;width:34.8px;height:34.1px"></div>
<div class="lbtn" style="left:36.4px;top:197.2px;width:34.8px;height:34.1px"></div>
<div class="lbtn" style="left:1.0px;top:232.1px;width:34.8px;height:34.1px"></div>
<div class="lbtn" style="left:1.0px;top:275.4px;width:34.8px;height:34.1px"></div>
<div class="lbtn" style="left:36.4px;top:275.4px;width:34.8px;height:34.1px"></div>
<div class="lbtn" style="left:1.0px;top:310.3px;width:34.8px;height:34.1px"></div>
<div class="lbtn" style="left:36.4px;top:310.3px;width:34.8px;height:34.1px"></div>
<div class="lbtn" style="left:1.0px;top:353.1px;width:34.8px;height:34.1px"></div>
<svg width="72" height="690"><g transform="translate(18.3,33.0)" ><path d="M-9 -10 H-3 M-6 -13 V-7 M5 -1 H11 M8 -4 V2 M-8.5 5 H-2.5 M-5.5 2 V8" stroke="#111" stroke-width="1"/><path d="M12.7 6.8 V11.2 H8.3 Z" fill="#111"/></g><g transform="translate(53.7,33.0)" ><path d="M-11 4.5 L11.5 -6" stroke="#111" stroke-width="1"/><path d="M12.7 6.8 V11.2 H8.3 Z" fill="#111"/></g><g transform="translate(18.3,67.7)" ><path d="M-10.5 9 C-9 -4 0 -11 10 -11" fill="none" stroke="#111" stroke-width="1"/><path d="M12.7 6.8 V11.2 H8.3 Z" fill="#111"/></g><g transform="translate(53.7,67.7)" ><circle cx="-1" cy="-1.5" r="9.8" fill="none" stroke="#111" stroke-width="1"/><path d="M12.7 6.8 V11.2 H8.3 Z" fill="#111"/></g><g transform="translate(18.3,102.50000000000001)" ><ellipse cx="-0.5" cy="-0.5" rx="13.5" ry="6.2" transform="rotate(-46 -0.5 -0.5)" fill="none" stroke="#111" stroke-width="1"/><path d="M12.7 6.8 V11.2 H8.3 Z" fill="#111"/></g><g transform="translate(53.7,102.50000000000001)" ><path d="M-12 -8.5 C-9 -12 -3 -3 2 3 C7 9 11 6 10 -2 C9 -9 5 -12 1 -5 C-3 2 -5 10 -8 8 C-11 5 -13 -4 -12 -8.5 Z" fill="none" stroke="#111" stroke-width="1"/><path d="M12.7 6.8 V11.2 H8.3 Z" fill="#111"/></g><g transform="translate(18.3,137.2)" ><path d="M-3 -7.5 C-10 -8 -10 2 -4 2 L10 2" fill="none" stroke="#111" stroke-width="1"/><path d="M12.7 6.8 V11.2 H8.3 Z" fill="#111"/></g><g transform="translate(53.7,137.2)" ><path d="M-8.8 -14 H-1.6 L2 -8.5 L-1.6 -3 H-8.8 L-12.4 -8.5 Z M9 -9.5 L14 -1 H3.8 Z" fill="none" stroke="#111" stroke-width="1"/><rect x="-11.5" y="2" width="14" height="7" fill="none" stroke="#111" stroke-width="1"/><path d="M12.7 6.8 V11.2 H8.3 Z" fill="#111"/></g><g transform="translate(18.3,172.0)" ><defs><pattern id="hp" width="2.2" height="2.2" patternUnits="userSpaceOnUse" patternTransform="rotate(-45)"><rect width="2.2" height="2.2" fill="#e6e6e6"/><rect width="2.2" height="0.9" fill="#555"/></pattern></defs><path d="M-11 -1 L-5 -7.5 H10 V6.5 H-11 Z" fill="url(#hp)" stroke="#111" stroke-width="1"/><circle cx="3" cy="0.5" r="3.6" fill="#eee" stroke="#111" stroke-width="1"/><path d="M12.7 6.8 V11.2 H8.3 Z" fill="#111"/></g><g transform="translate(18.3,215.8)" ><text x="0" y="9.5" text-anchor="middle" font-size="29" fill="#111" style="font-family:'Liberation Serif',serif">A</text></g><g transform="translate(53.7,215.8)" ><path d="M-9.5 -9.5 V8 M8.5 -9.5 V8 M-9.5 -5.8 H8.5" stroke="#111" stroke-width="1" fill="none"/><path d="M-9.5 -5.8 L-5.5 -7.6 V-4 Z M8.5 -5.8 L4.5 -7.6 V-4 Z" fill="#111"/><path d="M12.7 6.8 V11.2 H8.3 Z" fill="#111"/></g><g transform="translate(18.3,250.7)" ><rect x="-11.5" y="-8.5" width="23" height="17" rx="1" fill="#fff" stroke="#111" stroke-width="1.4"/><path d="M-9.5 6.5 V2 L-5.5 -1.5 L-2.5 1 L1.5 -3 L9.5 3 V6.5 Z" fill="#111"/><circle cx="6.3" cy="-4.3" r="1.7" fill="#111"/></g><g transform="translate(18.3,294.0)" ><path d="M-12.5 13 V-3.5 L5 13 Z" fill="#f2f2f2" stroke="#111" stroke-width="1.2"/><path d="M-9.5 10 V3.5 L-2.5 10 Z" fill="#fff" stroke="#111" stroke-width="1"/><g transform="rotate(-38 -3 -8)"><rect x="-9" y="-10.5" width="11" height="4.6" fill="#e3342f" stroke="#7c1410" stroke-width="0.5"/><path d="M2 -10.5 L6.5 -8.2 L2 -5.9 Z" fill="#efd3a7" stroke="#7d5a30" stroke-width="0.4"/><path d="M5 -9 L6.5 -8.2 L5 -7.4 Z" fill="#111"/></g><path d="M9 -12.5 L6 3 L7 7 M9 -12.5 L12 3 L11.3 7" stroke="#222" stroke-width="1" fill="none"/><circle cx="9" cy="-12" r="1.1" fill="#444"/><path d="M12.7 6.8 V11.2 H8.3 Z" fill="#111"/></g><g transform="translate(53.7,294.0)" ><rect x="-12.5" y="-4" width="25" height="8" rx="1" fill="#fbfbfb" stroke="#555" stroke-width="1"/><path d="M-10.5 -4 V-0.4" stroke="#555" stroke-width="0.6"/><path d="M-8.4 -4 V-1.8" stroke="#555" stroke-width="0.6"/><path d="M-6.3 -4 V-1.8" stroke="#555" stroke-width="0.6"/><path d="M-4.2 -4 V-1.8" stroke="#555" stroke-width="0.6"/><path d="M-2.1 -4 V-1.8" stroke="#555" stroke-width="0.6"/><path d="M0.0 -4 V-0.4" stroke="#555" stroke-width="0.6"/><path d="M2.1 -4 V-1.8" stroke="#555" stroke-width="0.6"/><path d="M4.2 -4 V-1.8" stroke="#555" stroke-width="0.6"/><path d="M6.3 -4 V-1.8" stroke="#555" stroke-width="0.6"/><path d="M8.4 -4 V-1.8" stroke="#555" stroke-width="0.6"/><path d="M10.5 -4 V-0.4" stroke="#555" stroke-width="0.6"/></g><g transform="translate(18.3,328.9)" ><g opacity="0.85"><rect x="-11" y="-11.5" width="17" height="13.5" fill="#efe7c4" stroke="#9a9a9a" stroke-width="1"/><circle cx="4" cy="4" r="7.3" fill="#efe7c4" fill-opacity="0.8" stroke="#9a9a9a" stroke-width="1"/><path d="M-12 1.3 H4" stroke="#e48a8a" stroke-width="0.8"/><circle cx="-12" cy="1.3" r="0.9" fill="#e05050"/></g></g><g transform="translate(53.7,328.9)" ><path d="M-10.5 -3 L6.5 -12.5" stroke="#ff2a2a" stroke-width="1.1"/><g transform="translate(-1.5,-6.5)"><path transform="scale(0.82)" d="M0 0 L0 16.5 L3.8 13 L6.6 19.3 L9.2 18.1 L6.4 12 L11.6 12 Z" fill="#fff" stroke="#666" stroke-width="1.1" stroke-linejoin="round" /></g><path d="M12.7 6.8 V11.2 H8.3 Z" fill="#111"/></g><g transform="translate(18.3,371.7)" ><path d="M-11 -3.5 L2.5 -11 L10.5 -4.5 V6 L-2.5 13 L-11 7 Z M-11 -3.5 L-2.5 2.5 L10.5 -4.5 M-2.5 2.5 V13" fill="none" stroke="#111" stroke-width="1.1" stroke-linejoin="round"/><path d="M12.7 6.8 V11.2 H8.3 Z" fill="#111"/></g></svg>
</div>
<div id="tabbar" class="abs"><svg width="60" height="24"><path d="M7.5 8 L15.5 16 M15.5 8 L7.5 16" stroke="#4a4a4a" stroke-width="1.1"/><circle cx="30.5" cy="11.5" r="5.3" fill="#f4f4f6" stroke="#2f4a8e" stroke-width="2"/><path d="M26.5 11.5 H34 M30.5 8 V15.5" stroke="#e9a0a0" stroke-width="0.6"/><path d="M30.5 11 L35.5 16.5" stroke="#f0a020" stroke-width="1.8"/><circle cx="36" cy="17" r="1" fill="#e06060"/></svg><span class="abs" style="left:534px;top:4.5px;font-size:12.3px;line-height:15px;color:#1a1a1a;white-space:nowrap">* park.dxf</span></div>
<div id="rulerbg" class="abs"></div>
<svg width="1500" height="844" style="pointer-events:none"><g font-size="9.7" fill="#111"><clipPath id="hrc"><rect x="95" y="132" width="1043" height="23"/></clipPath><clipPath id="vrc"><rect x="72" y="155" width="23" height="577"/></clipPath><g clip-path="url(#hrc)"><path d="M95.5 148 V155" stroke="#484848" stroke-width="1"/><text x="95.2" y="141.8" text-anchor="middle">-28</text><path d="M108.5 152 V155" stroke="#484848" stroke-width="1"/><path d="M120.5 148 V155" stroke="#484848" stroke-width="1"/><text x="120.2" y="141.8" text-anchor="middle">-26</text><path d="M132.5 152 V155" stroke="#484848" stroke-width="1"/><path d="M145.5 148 V155" stroke="#484848" stroke-width="1"/><text x="145.2" y="141.8" text-anchor="middle">-24</text><path d="M157.5 152 V155" stroke="#484848" stroke-width="1"/><path d="M169.5 148 V155" stroke="#484848" stroke-width="1"/><text x="169.2" y="141.8" text-anchor="middle">-22</text><path d="M181.5 152 V155" stroke="#484848" stroke-width="1"/><path d="M194.5 148 V155" stroke="#484848" stroke-width="1"/><text x="194.2" y="141.8" text-anchor="middle">-20</text><path d="M206.5 152 V155" stroke="#484848" stroke-width="1"/><path d="M218.5 148 V155" stroke="#484848" stroke-width="1"/><text x="218.2" y="141.8" text-anchor="middle">-18</text><path d="M230.5 152 V155" stroke="#484848" stroke-width="1"/><path d="M243.5 148 V155" stroke="#484848" stroke-width="1"/><text x="243.2" y="141.8" text-anchor="middle">-16</text><path d="M255.5 152 V155" stroke="#484848" stroke-width="1"/><path d="M267.5 148 V155" stroke="#484848" stroke-width="1"/><text x="267.2" y="141.8" text-anchor="middle">-14</text><path d="M279.5 152 V155" stroke="#484848" stroke-width="1"/><path d="M292.5 148 V155" stroke="#484848" stroke-width="1"/><text x="292.2" y="141.8" text-anchor="middle">-12</text><path d="M304.5 152 V155" stroke="#484848" stroke-width="1"/><path d="M316.5 148 V155" stroke="#484848" stroke-width="1"/><text x="316.2" y="141.8" text-anchor="middle">-10</text><path d="M329.5 152 V155" stroke="#484848" stroke-width="1"/><path d="M341.5 148 V155" stroke="#484848" stroke-width="1"/><text x="341.2" y="141.8" text-anchor="middle">-8</text><path d="M353.5 152 V155" stroke="#484848" stroke-width="1"/><path d="M365.5 148 V155" stroke="#484848" stroke-width="1"/><text x="365.2" y="141.8" text-anchor="middle">-6</text><path d="M378.5 152 V155" stroke="#484848" stroke-width="1"/><path d="M390.5 148 V155" stroke="#484848" stroke-width="1"/><text x="390.2" y="141.8" text-anchor="middle">-4</text><path d="M402.5 152 V155" stroke="#484848" stroke-width="1"/><path d="M414.5 148 V155" stroke="#484848" stroke-width="1"/><text x="414.2" y="141.8" text-anchor="middle">-2</text><path d="M427.5 152 V155" stroke="#484848" stroke-width="1"/><path d="M439.5 148 V155" stroke="#484848" stroke-width="1"/><text x="439.2" y="141.8" text-anchor="middle">0</text><path d="M451.5 152 V155" stroke="#484848" stroke-width="1"/><path d="M463.5 148 V155" stroke="#484848" stroke-width="1"/><text x="463.2" y="141.8" text-anchor="middle">2</text><path d="M476.5 152 V155" stroke="#484848" stroke-width="1"/><path d="M488.5 148 V155" stroke="#484848" stroke-width="1"/><text x="488.2" y="141.8" text-anchor="middle">4</text><path d="M500.5 152 V155" stroke="#484848" stroke-width="1"/><path d="M512.5 148 V155" stroke="#484848" stroke-width="1"/><text x="512.2" y="141.8" text-anchor="middle">6</text><path d="M525.5 152 V155" stroke="#484848" stroke-width="1"/><path d="M537.5 148 V155" stroke="#484848" stroke-width="1"/><text x="537.2" y="141.8" text-anchor="middle">8</text><path d="M549.5 152 V155" stroke="#484848" stroke-width="1"/><path d="M562.5 148 V155" stroke="#484848" stroke-width="1"/><text x="562.2" y="141.8" text-anchor="middle">10</text><path d="M574.5 152 V155" stroke="#484848" stroke-width="1"/><path d="M586.5 148 V155" stroke="#484848" stroke-width="1"/><text x="586.2" y="141.8" text-anchor="middle">12</text><path d="M598.5 152 V155" stroke="#484848" stroke-width="1"/><path d="M611.5 148 V155" stroke="#484848" stroke-width="1"/><text x="611.2" y="141.8" text-anchor="middle">14</text><path d="M623.5 152 V155" stroke="#484848" stroke-width="1"/><path d="M635.5 148 V155" stroke="#484848" stroke-width="1"/><text x="635.2" y="141.8" text-anchor="middle">16</text><path d="M647.5 152 V155" stroke="#484848" stroke-width="1"/><path d="M660.5 148 V155" stroke="#484848" stroke-width="1"/><text x="660.2" y="141.8" text-anchor="middle">18</text><path d="M672.5 152 V155" stroke="#484848" stroke-width="1"/><path d="M684.5 148 V155" stroke="#484848" stroke-width="1"/><text x="684.2" y="141.8" text-anchor="middle">20</text><path d="M696.5 152 V155" stroke="#484848" stroke-width="1"/><path d="M709.5 148 V155" stroke="#484848" stroke-width="1"/><text x="709.2" y="141.8" text-anchor="middle">22</text><path d="M721.5 152 V155" stroke="#484848" stroke-width="1"/><path d="M733.5 148 V155" stroke="#484848" stroke-width="1"/><text x="733.2" y="141.8" text-anchor="middle">24</text><path d="M746.5 152 V155" stroke="#484848" stroke-width="1"/><path d="M758.5 148 V155" stroke="#484848" stroke-width="1"/><text x="758.2" y="141.8" text-anchor="middle">26</text><path d="M770.5 152 V155" stroke="#484848" stroke-width="1"/><path d="M782.5 148 V155" stroke="#484848" stroke-width="1"/><text x="782.2" y="141.8" text-anchor="middle">28</text><path d="M795.5 152 V155" stroke="#484848" stroke-width="1"/><path d="M807.5 148 V155" stroke="#484848" stroke-width="1"/><text x="807.2" y="141.8" text-anchor="middle">30</text><path d="M819.5 152 V155" stroke="#484848" stroke-width="1"/><path d="M831.5 148 V155" stroke="#484848" stroke-width="1"/><text x="831.2" y="141.8" text-anchor="middle">32</text><path d="M844.5 152 V155" stroke="#484848" stroke-width="1"/><path d="M856.5 148 V155" stroke="#484848" stroke-width="1"/><text x="856.2" y="141.8" text-anchor="middle">34</text><path d="M868.5 152 V155" stroke="#484848" stroke-width="1"/><path d="M880.5 148 V155" stroke="#484848" stroke-width="1"/><text x="880.2" y="141.8" text-anchor="middle">36</text><path d="M893.5 152 V155" stroke="#484848" stroke-width="1"/><path d="M905.5 148 V155" stroke="#484848" stroke-width="1"/><text x="905.2" y="141.8" text-anchor="middle">38</text><path d="M917.5 152 V155" stroke="#484848" stroke-width="1"/><path d="M930.5 148 V155" stroke="#484848" stroke-width="1"/><text x="930.2" y="141.8" text-anchor="middle">40</text><path d="M942.5 152 V155" stroke="#484848" stroke-width="1"/><path d="M954.5 148 V155" stroke="#484848" stroke-width="1"/><text x="954.2" y="141.8" text-anchor="middle">42</text><path d="M966.5 152 V155" stroke="#484848" stroke-width="1"/><path d="M979.5 148 V155" stroke="#484848" stroke-width="1"/><text x="979.2" y="141.8" text-anchor="middle">44</text><path d="M991.5 152 V155" stroke="#484848" stroke-width="1"/><path d="M1003.5 148 V155" stroke="#484848" stroke-width="1"/><text x="1003.2" y="141.8" text-anchor="middle">46</text><path d="M1015.5 152 V155" stroke="#484848" stroke-width="1"/><path d="M1028.5 148 V155" stroke="#484848" stroke-width="1"/><text x="1028.2" y="141.8" text-anchor="middle">48</text><path d="M1040.5 152 V155" stroke="#484848" stroke-width="1"/><path d="M1052.5 148 V155" stroke="#484848" stroke-width="1"/><text x="1052.2" y="141.8" text-anchor="middle">50</text><path d="M1064.5 152 V155" stroke="#484848" stroke-width="1"/><path d="M1077.5 148 V155" stroke="#484848" stroke-width="1"/><text x="1077.2" y="141.8" text-anchor="middle">52</text><path d="M1089.5 152 V155" stroke="#484848" stroke-width="1"/><path d="M1101.5 148 V155" stroke="#484848" stroke-width="1"/><text x="1101.2" y="141.8" text-anchor="middle">54</text><path d="M1113.5 152 V155" stroke="#484848" stroke-width="1"/><path d="M1126.5 148 V155" stroke="#484848" stroke-width="1"/><text x="1126.2" y="141.8" text-anchor="middle">56</text><path d="M1138.5 152 V155" stroke="#484848" stroke-width="1"/></g><g clip-path="url(#vrc)"><path d="M88 735.5 H95" stroke="#484848" stroke-width="1"/><text transform="translate(81.2,735.0) rotate(-90)" text-anchor="middle">-16</text><path d="M92 722.5 H95" stroke="#484848" stroke-width="1"/><path d="M88 710.5 H95" stroke="#484848" stroke-width="1"/><text transform="translate(81.2,710.0) rotate(-90)" text-anchor="middle">-14</text><path d="M92 698.5 H95" stroke="#484848" stroke-width="1"/><path d="M88 685.5 H95" stroke="#484848" stroke-width="1"/><text transform="translate(81.2,685.0) rotate(-90)" text-anchor="middle">-12</text><path d="M92 673.5 H95" stroke="#484848" stroke-width="1"/><path d="M88 661.5 H95" stroke="#484848" stroke-width="1"/><text transform="translate(81.2,661.0) rotate(-90)" text-anchor="middle">-10</text><path d="M92 649.5 H95" stroke="#484848" stroke-width="1"/><path d="M88 636.5 H95" stroke="#484848" stroke-width="1"/><text transform="translate(81.2,636.0) rotate(-90)" text-anchor="middle">-8</text><path d="M92 624.5 H95" stroke="#484848" stroke-width="1"/><path d="M88 612.5 H95" stroke="#484848" stroke-width="1"/><text transform="translate(81.2,612.0) rotate(-90)" text-anchor="middle">-6</text><path d="M92 600.5 H95" stroke="#484848" stroke-width="1"/><path d="M88 587.5 H95" stroke="#484848" stroke-width="1"/><text transform="translate(81.2,587.0) rotate(-90)" text-anchor="middle">-4</text><path d="M92 575.5 H95" stroke="#484848" stroke-width="1"/><path d="M88 563.5 H95" stroke="#484848" stroke-width="1"/><text transform="translate(81.2,563.0) rotate(-90)" text-anchor="middle">-2</text><path d="M92 551.5 H95" stroke="#484848" stroke-width="1"/><path d="M88 538.5 H95" stroke="#484848" stroke-width="1"/><text transform="translate(81.2,538.0) rotate(-90)" text-anchor="middle">0</text><path d="M92 526.5 H95" stroke="#484848" stroke-width="1"/><path d="M88 514.5 H95" stroke="#484848" stroke-width="1"/><text transform="translate(81.2,514.0) rotate(-90)" text-anchor="middle">2</text><path d="M92 502.5 H95" stroke="#484848" stroke-width="1"/><path d="M88 489.5 H95" stroke="#484848" stroke-width="1"/><text transform="translate(81.2,489.0) rotate(-90)" text-anchor="middle">4</text><path d="M92 477.5 H95" stroke="#484848" stroke-width="1"/><path d="M88 465.5 H95" stroke="#484848" stroke-width="1"/><text transform="translate(81.2,465.0) rotate(-90)" text-anchor="middle">6</text><path d="M92 452.5 H95" stroke="#484848" stroke-width="1"/><path d="M88 440.5 H95" stroke="#484848" stroke-width="1"/><text transform="translate(81.2,440.0) rotate(-90)" text-anchor="middle">8</text><path d="M92 428.5 H95" stroke="#484848" stroke-width="1"/><path d="M88 416.5 H95" stroke="#484848" stroke-width="1"/><text transform="translate(81.2,416.0) rotate(-90)" text-anchor="middle">10</text><path d="M92 403.5 H95" stroke="#484848" stroke-width="1"/><path d="M88 391.5 H95" stroke="#484848" stroke-width="1"/><text transform="translate(81.2,391.0) rotate(-90)" text-anchor="middle">12</text><path d="M92 379.5 H95" stroke="#484848" stroke-width="1"/><path d="M88 367.5 H95" stroke="#484848" stroke-width="1"/><text transform="translate(81.2,367.0) rotate(-90)" text-anchor="middle">14</text><path d="M92 354.5 H95" stroke="#484848" stroke-width="1"/><path d="M88 342.5 H95" stroke="#484848" stroke-width="1"/><text transform="translate(81.2,342.0) rotate(-90)" text-anchor="middle">16</text><path d="M92 330.5 H95" stroke="#484848" stroke-width="1"/><path d="M88 318.5 H95" stroke="#484848" stroke-width="1"/><text transform="translate(81.2,318.0) rotate(-90)" text-anchor="middle">18</text><path d="M92 305.5 H95" stroke="#484848" stroke-width="1"/><path d="M88 293.5 H95" stroke="#484848" stroke-width="1"/><text transform="translate(81.2,293.0) rotate(-90)" text-anchor="middle">20</text><path d="M92 281.5 H95" stroke="#484848" stroke-width="1"/><path d="M88 268.5 H95" stroke="#484848" stroke-width="1"/><text transform="translate(81.2,268.0) rotate(-90)" text-anchor="middle">22</text><path d="M92 256.5 H95" stroke="#484848" stroke-width="1"/><path d="M88 244.5 H95" stroke="#484848" stroke-width="1"/><text transform="translate(81.2,244.0) rotate(-90)" text-anchor="middle">24</text><path d="M92 232.5 H95" stroke="#484848" stroke-width="1"/><path d="M88 219.5 H95" stroke="#484848" stroke-width="1"/><text transform="translate(81.2,219.0) rotate(-90)" text-anchor="middle">26</text><path d="M92 207.5 H95" stroke="#484848" stroke-width="1"/><path d="M88 195.5 H95" stroke="#484848" stroke-width="1"/><text transform="translate(81.2,195.0) rotate(-90)" text-anchor="middle">28</text><path d="M92 183.5 H95" stroke="#484848" stroke-width="1"/><path d="M88 170.5 H95" stroke="#484848" stroke-width="1"/><text transform="translate(81.2,170.0) rotate(-90)" text-anchor="middle">30</text><path d="M92 158.5 H95" stroke="#484848" stroke-width="1"/></g></g><path d="M386.5 145.5 H398.5 L392.5 151.5 Z" fill="#000"/><path d="M85 268.5 V280.5 L91 274.5 Z" fill="#000"/></svg>
<div id="canvas" class="abs"><svg width="1043" height="577" viewBox="95 155 1043 577" style="left:0;top:0"><defs><pattern id="dots" x="439" y="538" width="12.265" height="12.265" patternUnits="userSpaceOnUse"><rect x="0" y="0" width="1" height="1" fill="#ffffff" fill-opacity="0.30"/></pattern></defs><rect x="452" y="120" width="644" height="431.7" fill="#808080"/><rect x="438" y="100" width="647" height="440.2" fill="#c9c9c9"/><rect x="441" y="100" width="641" height="437.2" fill="#ffffff"/><rect x="95" y="155" width="1043" height="577" fill="url(#dots)"/><clipPath id="paperclip"><rect x="441" y="100" width="641" height="437.2"/></clipPath><g stroke="#ffffff" stroke-opacity="0.10" stroke-width="1"><path d="M71.5 155 V732"/><path d="M194.5 155 V732"/><path d="M316.5 155 V732"/><path d="M439.5 155 V732"/><path d="M562.5 155 V732"/><path d="M684.5 155 V732"/><path d="M807.5 155 V732"/><path d="M930.5 155 V732"/><path d="M1052.5 155 V732"/><path d="M1175.5 155 V732"/><path d="M95 784.5 H1138"/><path d="M95 661.5 H1138"/><path d="M95 538.5 H1138"/><path d="M95 416.5 H1138"/><path d="M95 293.5 H1138"/><path d="M95 170.5 H1138"/></g><g stroke="#f2f2f2" stroke-width="1" clip-path="url(#paperclip)"><path d="M71.5 155 V732"/><path d="M194.5 155 V732"/><path d="M316.5 155 V732"/><path d="M439.5 155 V732"/><path d="M562.5 155 V732"/><path d="M684.5 155 V732"/><path d="M807.5 155 V732"/><path d="M930.5 155 V732"/><path d="M1052.5 155 V732"/><path d="M1175.5 155 V732"/><path d="M95 784.5 H1138"/><path d="M95 661.5 H1138"/><path d="M95 538.5 H1138"/><path d="M95 416.5 H1138"/><path d="M95 293.5 H1138"/><path d="M95 170.5 H1138"/></g><path d="M470.3 140 V507.8 H1052.6 V140" fill="none" stroke="#8080ff" stroke-width="3.2" stroke-linejoin="round"/><g><rect x="-14.8" y="-4.3" width="29.5" height="8.6" rx="2.2" fill="#c6c6c6" transform="translate(544,299.3) rotate(-26.5)"/><rect x="-15.5" y="-4.5" width="31" height="9" rx="2.2" fill="#c6c6c6" transform="translate(591.5,287.3) rotate(-1.5)"/><rect x="-14.8" y="-4.2" width="29.5" height="8.4" rx="2.2" fill="#c6c6c6" transform="translate(640,295.3) rotate(22.6)"/><rect x="-14.8" y="-4.1" width="29.5" height="8.2" rx="2.2" fill="#c6c6c6" transform="translate(680.7,322.8) rotate(45)"/><rect x="-15.0" y="-4.3" width="30" height="8.6" rx="2.2" fill="#c6c6c6" transform="translate(706.8,364.3) rotate(75.5)"/><rect x="-15.0" y="-4.5" width="30" height="9" rx="2.2" fill="#c6c6c6" transform="translate(712.9,413.7) rotate(95)"/><path d="M559.2 539.6 L590 540.6 L589.6 548.6 L559.2 546.4 Z" fill="#cbcbcb"/></g><path d="M423.3 402.6 C426.9 402.8 437.3 404.1 445.2 403.8 C453.1 403.5 463.2 402.6 470.7 400.6 C478.2 398.6 484.5 395.4 490.3 391.6 C496.1 387.8 500.4 383.3 505.4 378.0 C510.4 372.7 515.1 366.2 520.4 360.0 C525.7 353.8 531.1 346.5 537.0 341.0 C542.9 335.5 549.2 330.7 556.0 327.0 C562.8 323.3 570.7 320.8 578.0 319.0 C585.3 317.2 593.0 316.2 600.0 316.0 C607.0 315.8 613.7 316.6 620.0 318.0 C626.3 319.4 630.9 319.7 637.6 324.3 C644.3 328.9 653.9 338.3 660.2 345.4 C666.5 352.5 671.7 360.2 675.3 366.9 C678.9 373.6 680.5 379.8 682.0 385.6 C683.5 391.5 683.6 396.8 684.0 402.0 C684.4 407.2 684.7 412.2 684.4 417.0 C684.1 421.8 684.1 425.4 682.3 431.0 C680.5 436.6 676.0 444.1 673.8 450.3 C671.5 456.5 669.7 463.1 668.8 468.4 C667.9 473.7 667.9 477.8 668.5 482.0 C669.1 486.2 670.3 489.8 672.2 493.5 C674.1 497.2 676.8 500.2 679.8 504.0 C682.8 507.8 687.2 511.8 690.3 516.1 C693.4 520.4 696.6 525.2 698.6 529.7 C700.6 534.2 701.3 539.2 702.0 543.2 C702.7 547.2 702.1 551.0 703.0 554.0 C703.9 557.0 704.7 560.7 707.6 561.3 C710.5 561.9 714.5 559.0 720.4 557.5 C726.3 556.0 735.5 553.3 743.0 552.2 C750.5 551.1 757.3 551.2 765.6 551.0 C773.9 550.8 788.2 550.8 792.7 550.7" fill="none" stroke="#cfa251" stroke-width="1"/><path d="M421.5 421.7 C425.4 421.9 437.0 423.3 445.2 423.2 C453.4 423.1 463.2 422.8 470.7 421.0 C478.2 419.2 484.0 416.1 490.3 412.7 C496.6 409.3 502.1 405.9 508.4 400.6 C514.7 395.3 522.0 387.8 527.9 381.0 C533.8 374.2 538.7 365.8 543.7 360.0 C548.7 354.2 552.3 349.8 558.0 346.0 C563.7 342.2 571.0 339.3 578.0 337.5 C585.0 335.7 593.7 335.1 600.0 335.1 C606.3 335.1 611.0 336.0 616.0 337.5 C621.0 339.0 623.9 339.0 630.1 343.9 C636.3 348.8 648.2 359.9 653.4 366.9 C658.5 373.8 659.2 379.8 661.0 385.6 C662.8 391.5 663.6 396.9 664.2 402.0 C664.8 407.1 664.9 410.7 664.5 416.0 C664.1 421.3 663.8 427.0 661.6 434.0 C659.4 441.0 653.4 450.6 651.2 457.8 C649.0 465.0 648.0 470.4 648.2 477.4 C648.5 484.4 650.2 493.4 652.7 499.6 C655.2 505.8 659.4 509.8 663.2 514.6 C667.0 519.4 672.2 523.9 675.3 528.2 C678.4 532.5 680.8 536.5 682.0 540.2 C683.2 544.0 683.2 546.7 682.8 550.7 C682.4 554.7 681.6 559.8 679.8 564.3 C678.0 568.8 675.5 573.9 672.2 577.8 C668.9 581.7 664.7 585.2 660.2 587.6 C655.7 590.0 650.2 591.7 645.2 592.1 C640.2 592.5 635.1 591.8 630.1 589.9 C625.1 588.0 620.0 584.2 615.0 580.8 C610.0 577.4 605.7 573.1 600.0 569.6 C594.3 566.1 586.3 561.8 580.6 560.0 C574.9 558.2 571.9 558.2 565.6 559.0 C559.3 559.8 549.3 561.9 543.0 565.0 C536.7 568.1 531.7 572.9 527.9 577.8 C524.1 582.7 522.1 588.4 520.4 594.4 C518.7 600.4 518.3 610.3 517.9 613.5" fill="none" stroke="#cfa251" stroke-width="1"/><path d="M537.4 614.4 C538.0 611.3 538.5 601.0 540.7 595.9 C542.9 590.8 546.4 586.8 550.5 583.9 C554.6 581.0 560.6 579.2 565.6 578.6 C570.6 578.0 574.9 577.9 580.6 580.1 C586.3 582.3 593.8 587.9 600.0 592.0 C606.2 596.1 611.3 601.3 618.0 604.5 C624.7 607.7 633.8 609.9 640.0 611.0 C646.2 612.1 650.6 612.0 655.0 611.4 C659.4 610.8 661.3 610.5 666.2 607.5 C671.1 604.5 677.8 597.4 684.3 593.5 C690.8 589.6 698.1 587.0 705.4 583.9 C712.7 580.8 720.4 577.0 727.9 574.8 C735.4 572.6 744.2 571.4 750.5 570.8 C756.8 570.2 760.6 570.5 765.6 571.0 C770.6 571.5 775.6 572.6 780.6 574.1 C785.6 575.6 793.2 579.1 795.7 580.1" fill="none" stroke="#cfa251" stroke-width="1"/><g fill="none" stroke="#1a1a1a" stroke-width="1"><path d="M409.3 277.3 L715.1 261.4 L794.9 550.2 L791.9 550.5 L713.2 267.5 L410 283.6"/><path d="M738.5 254.6 L800.2 480 C806 500 815 520 819.5 538 C823 553 824.5 563 824.3 572 C824 590 817 612 811 631.5"/><path d="M779.5 629.4 L795.7 579.8 L798.4 581.1 L783.1 629.6"/></g><circle cx="661.7" cy="307" r="3.7" fill="none" stroke="#111" stroke-width="1.3"/><path d="M662.2 303.3 L663.9000000000001 302" stroke="#111" stroke-width="1.2"/><circle cx="602.4" cy="545.7" r="3.7" fill="none" stroke="#111" stroke-width="1.3"/><path d="M602.9 542.0 L604.6 540.7" stroke="#111" stroke-width="1.2"/><circle cx="779.9" cy="543.2" r="3.7" fill="none" stroke="#111" stroke-width="1.3"/><path d="M780.4 539.5 L782.1 538.2" stroke="#111" stroke-width="1.2"/><g><path d=" M497.5 375.7 L494.7 375.2 L492.5 372.2 L489.7 372.8 L488.4 369.8 L485.2 369.8 L484.9 366.3 L481.1 365.6 L481.6 362.0 L477.4 360.2 L477.3 356.7 L473.2 353.0 L473.9 348.9 L471.8 343.7 L476.3 341.3 L477.7 337.8 L483.2 338.6 L485.3 336.8 L488.9 337.9 L490.5 334.4 L493.3 335.1 L496.0 333.0 L498.5 335.4 L501.7 334.5 L503.0 338.6 L506.6 338.4 L507.0 342.3 L511.5 342.7 L511.6 346.5 L515.1 349.0 L513.2 353.0 L515.1 356.5 L511.4 359.4 L512.9 363.2 L511.4 366.3 L512.2 371.3 L509.4 373.7 L508.6 378.8 L504.3 378.3 L501.3 379.6 Z M452.6 353.4 L451.8 349.4 L455.2 348.1 L456.6 344.9 L460.5 344.9 L463.0 342.2 L466.9 343.7 L470.2 340.5 L473.8 343.2 L478.0 341.7 L480.6 345.8 L483.9 347.4 L483.4 352.8 L485.6 354.4 L484.4 358.0 L488.1 359.0 L488.0 361.7 L493.2 364.1 L493.0 367.1 L495.9 371.0 L493.4 373.5 L493.5 377.3 L489.9 378.5 L489.3 383.0 L485.2 383.3 L482.2 385.8 L477.7 383.7 L474.0 383.9 L470.8 379.5 L467.7 378.8 L466.2 375.0 L462.6 375.7 L460.5 373.6 L455.4 373.7 L454.5 370.2 L451.0 368.2 L452.7 364.6 L450.4 361.9 L452.5 359.1 L451.2 355.9 Z M492.5 327.1 L495.8 328.2 L496.2 331.3 L499.7 333.5 L498.6 336.9 L500.3 340.5 L496.4 343.5 L494.9 346.8 L489.7 347.6 L488.2 350.2 L484.3 349.9 L483.4 353.7 L480.6 354.6 L478.4 358.5 L475.0 356.8 L471.6 360.4 L468.8 358.3 L464.2 360.9 L461.7 358.3 L456.4 359.3 L454.8 355.9 L451.0 353.9 L453.9 348.7 L453.8 345.1 L458.3 341.5 L458.7 338.6 L461.6 336.5 L460.8 333.4 L463.0 331.4 L462.8 327.3 L466.4 326.6 L468.0 323.1 L471.8 323.5 L474.1 319.5 L477.6 320.8 L481.3 316.7 L484.4 319.1 L488.6 317.6 L490.3 321.2 L493.2 322.6 Z M512.4 361.8 L511.3 364.6 L507.4 365.9 L506.9 368.9 L503.9 370.1 L504.4 374.2 L501.4 375.3 L500.7 379.3 L497.8 380.4 L495.9 383.8 L492.2 383.0 L489.7 385.8 L486.0 383.4 L483.1 385.0 L480.1 381.6 L477.0 382.8 L474.6 380.2 L471.3 381.5 L469.2 378.8 L465.2 380.2 L463.4 377.5 L459.0 378.0 L457.6 374.9 L453.9 373.9 L454.0 369.9 L450.9 368.1 L451.2 364.5 L448.3 362.3 L449.4 358.8 L445.5 356.2 L446.0 352.9 L444.3 349.6 L444.5 346.1 L445.9 343.0 L447.0 339.9 L447.9 336.6 L450.3 334.1 L452.0 331.2 L454.1 328.7 L455.9 325.8 L461.5 327.4 L463.9 325.7 L468.6 328.3 L470.7 326.9 L473.9 328.5 L475.9 326.3 L478.4 326.8 L480.8 323.8 L483.4 324.9 L486.4 323.1 L489.0 324.3 L492.6 322.6 L494.7 325.3 L498.2 325.1 L500.0 327.8 L504.3 327.4 L506.0 330.2 L511.4 330.2 L512.4 333.7 L515.4 336.0 L516.0 339.6 L517.2 342.9 L517.7 346.3 L518.8 349.6 L518.9 353.1 L518.2 356.5 L515.5 359.4 Z" fill="none" stroke="#5f9628" stroke-width="0.65" stroke-linejoin="round"/><path d=" M508.5 368.5 L508.3 371.1 L505.0 371.1 L500.7 370.4 L499.4 366.3 L495.1 365.1 L495.4 362.5 L495.0 359.9 L498.1 359.9 L501.7 359.7 L504.9 362.1 L508.1 364.0 L507.2 366.3 Z M500.1 371.3 L498.8 372.3 L497.6 370.1 L494.6 368.5 L495.4 365.2 L493.6 361.7 L495.7 361.6 L497.4 361.3 L498.7 363.8 L501.1 365.6 L501.9 369.2 L502.2 371.9 Z M507.1 360.4 L507.2 362.2 L504.3 361.6 L501.4 361.1 L499.9 359.3 L496.5 358.5 L497.1 357.0 L497.3 355.4 L500.5 356.8 L503.2 355.8 L504.6 358.1 L506.5 359.0 Z M482.7 374.8 L480.4 375.0 L480.3 371.2 L478.5 368.8 L478.5 365.1 L479.5 361.8 L482.1 362.7 L484.2 363.0 L484.6 365.9 L487.2 368.4 L485.4 371.4 L485.3 375.4 Z M476.6 375.0 L475.2 373.8 L477.4 370.0 L477.0 367.0 L479.5 365.3 L480.9 360.0 L482.2 362.4 L483.8 363.0 L482.5 366.1 L482.4 369.4 L479.7 371.3 L478.6 374.0 Z M489.8 372.5 L488.7 373.4 L487.8 371.1 L485.8 369.7 L486.3 367.2 L484.9 364.1 L486.8 364.8 L488.0 364.6 L488.7 366.5 L491.0 367.7 L491.3 370.7 L491.0 372.3 Z M462.5 347.6 L461.1 345.1 L465.0 345.3 L468.5 343.9 L472.2 345.6 L475.2 346.9 L474.3 349.0 L473.1 350.6 L470.9 351.2 L467.4 353.5 L464.0 350.8 L461.0 349.6 Z M466.4 346.7 L466.3 345.2 L468.2 345.3 L471.0 344.1 L473.3 346.5 L474.5 347.6 L473.9 348.8 L474.3 350.5 L471.8 350.1 L469.1 351.1 L467.5 348.5 L464.0 347.9 Z M473.9 334.5 L475.1 332.7 L475.9 335.7 L477.0 338.0 L476.4 340.1 L477.4 342.8 L476.2 343.8 L474.8 343.7 L474.2 340.8 L472.2 339.2 L473.0 336.9 L472.6 334.5 Z M478.6 332.2 L480.3 331.1 L481.2 334.1 L482.9 336.8 L481.4 339.5 L481.5 341.4 L480.3 343.0 L478.5 344.2 L477.9 340.6 L476.0 337.9 L477.6 335.5 L476.7 331.7 Z M478.3 330.0 L479.9 329.3 L481.0 331.8 L482.8 335.6 L481.5 338.8 L481.7 341.5 L480.4 343.2 L478.5 344.7 L477.6 339.9 L475.7 336.7 L477.1 333.6 L476.5 329.8 Z M484.4 331.9 L485.7 332.5 L486.0 334.7 L486.8 337.6 L485.1 340.1 L484.4 342.0 L483.2 340.9 L481.3 342.7 L481.6 339.7 L480.4 336.7 L482.9 335.2 L483.1 332.6 Z M501.8 340.7 L503.8 341.6 L501.5 343.7 L500.2 346.4 L497.4 345.6 L494.9 348.2 L493.6 346.9 L492.1 345.6 L494.9 343.5 L496.3 341.3 L498.8 340.6 L501.0 339.2 Z M508.0 342.3 L508.7 344.4 L505.2 346.1 L501.9 348.5 L497.9 348.1 L494.8 348.5 L495.5 346.1 L492.5 344.6 L496.1 343.0 L499.4 340.1 L502.8 341.8 L506.1 340.9 Z M503.1 349.2 L503.6 350.5 L501.2 350.1 L499.5 352.2 L497.2 350.6 L495.8 350.1 L496.0 349.1 L495.5 347.9 L497.2 347.7 L499.6 346.8 L501.5 348.0 L504.2 347.9 Z" fill="none" stroke="#5f9628" stroke-width="0.6" stroke-linejoin="round"/><path d="M488.4 351.8 L488.5 353.4 L486.6 353.8 L484.8 354.3 L483.7 353.0 L482.5 351.8 L483.7 350.6 L484.8 349.3 L486.6 349.8 L488.5 350.2 Z M487.1 350.5 L491.9 355.6 L496.1 361.4 L495.5 362.0 L490.3 357.2 L484.5 353.1 Z M491.1 355.7 L494.1 356.3 L497.1 356.8 L497.1 357.2 L494.0 357.2 L491.0 357.2 Z M487.5 352.4 L484.3 357.3 L482.5 362.8 L481.7 362.5 L482.2 356.6 L484.1 351.2 Z M483.9 356.6 L485.3 360.3 L486.7 364.0 L486.3 364.2 L484.4 360.7 L482.6 357.2 Z M485.4 353.6 L479.8 352.2 L474.5 349.4 L474.7 348.6 L480.3 350.0 L486.2 350.0 Z M479.4 351.5 L477.7 347.5 L475.9 343.5 L476.3 343.3 L478.5 347.0 L480.7 350.8 Z M484.2 352.8 L481.2 348.5 L479.9 342.9 L480.6 342.5 L483.1 347.3 L487.4 350.8 Z M481.4 347.8 L482.1 345.1 L482.7 342.5 L483.2 342.6 L483.0 345.3 L482.9 348.0 Z M484.8 350.2 L489.0 347.8 L493.8 346.2 L494.3 346.9 L490.2 349.7 L486.8 353.4 Z M489.7 348.0 L492.4 348.4 L495.0 348.9 L495.0 349.3 L492.3 349.4 L489.6 349.5 Z" fill="#5c9422" stroke="#5c9422" stroke-width="0.4" stroke-linejoin="round"/><path d=" M676.5 484.4 L675.9 481.5 L679.0 479.9 L678.3 476.5 L681.1 475.2 L681.0 470.6 L684.8 470.3 L687.6 468.0 L691.7 469.8 L695.0 468.6 L698.0 471.8 L701.6 470.0 L704.5 471.7 L710.4 469.1 L712.9 472.3 L718.0 473.1 L718.3 477.4 L720.0 480.4 L718.1 484.2 L719.2 487.1 L717.0 489.9 L717.3 492.9 L713.9 494.6 L712.6 497.1 L708.1 496.8 L707.1 499.5 L703.8 498.8 L702.9 503.1 L700.0 503.9 L697.0 508.9 L693.0 508.3 L688.6 509.1 L685.4 505.8 L681.3 505.0 L680.6 500.2 L676.9 499.1 L677.0 495.2 L674.0 493.1 L674.9 489.7 L673.6 487.0 Z M702.2 446.1 L705.6 446.3 L706.4 449.5 L710.2 450.3 L710.4 453.7 L713.3 456.2 L710.8 460.2 L710.5 463.6 L707.0 466.3 L706.9 469.3 L704.1 471.1 L704.8 475.3 L702.2 477.3 L701.5 482.2 L697.7 482.5 L695.5 486.8 L691.8 485.9 L688.3 489.5 L684.9 488.0 L680.7 489.3 L678.5 485.8 L674.8 485.1 L675.8 479.2 L675.1 475.8 L678.1 471.1 L676.1 469.1 L677.9 466.3 L674.5 463.8 L676.2 461.2 L673.4 457.0 L676.2 454.5 L676.6 450.4 L680.0 448.6 L681.3 444.3 L685.3 443.9 L687.8 439.7 L691.6 440.4 L695.1 438.2 L697.8 442.1 L700.9 442.4 Z M719.5 489.6 L717.9 493.6 L715.4 492.8 L712.1 496.6 L709.7 494.0 L705.8 494.7 L704.7 490.4 L700.3 489.9 L699.5 485.9 L695.3 483.7 L695.8 479.3 L693.3 475.7 L696.2 471.9 L696.1 468.4 L700.5 466.5 L699.1 462.4 L702.3 460.9 L701.7 456.1 L704.9 455.1 L706.5 451.3 L710.4 453.5 L713.2 452.4 L716.0 456.2 L718.7 455.6 L720.6 458.0 L724.2 456.8 L726.0 459.3 L730.2 459.6 L730.9 463.4 L734.8 465.5 L734.3 469.7 L737.7 473.0 L737.1 477.1 L737.0 481.2 L736.6 485.1 L735.7 488.8 L730.7 489.3 L727.9 490.4 L723.3 488.2 L722.1 490.5 Z M686.8 504.9 L682.6 505.8 L680.8 502.3 L677.1 501.7 L677.0 497.0 L673.8 495.4 L675.3 490.5 L672.2 488.8 L673.1 485.1 L670.3 483.0 L670.6 479.8 L667.5 477.1 L667.5 473.9 L664.5 470.5 L665.1 467.0 L665.8 463.6 L667.4 460.4 L668.7 457.2 L670.0 453.8 L671.7 450.7 L675.6 449.4 L676.9 445.9 L681.2 445.9 L682.6 442.0 L686.6 442.4 L688.9 439.7 L692.8 441.1 L695.6 439.0 L699.0 441.3 L701.9 440.4 L704.5 444.9 L707.2 444.6 L708.7 448.8 L711.4 448.2 L712.2 452.0 L715.9 450.3 L717.2 452.6 L722.0 451.0 L724.4 452.6 L730.1 451.9 L731.9 454.6 L735.3 456.8 L735.6 460.4 L737.1 463.6 L737.3 467.1 L738.3 470.5 L739.2 473.9 L739.2 477.6 L737.1 480.8 L736.8 484.4 L733.4 486.8 L734.1 491.0 L730.0 492.5 L729.0 495.9 L725.0 496.8 L723.5 499.9 L718.8 498.9 L716.8 501.4 L712.9 499.9 L710.6 501.6 L707.2 499.6 L705.0 501.8 L702.2 500.3 L699.6 503.0 L696.9 502.0 L693.3 505.3 L690.3 504.7 Z" fill="none" stroke="#5f9628" stroke-width="0.65" stroke-linejoin="round"/><path d=" M686.5 500.5 L686.0 497.8 L687.7 495.1 L687.6 491.3 L691.4 489.4 L694.8 486.9 L695.2 490.7 L697.5 491.5 L695.8 494.3 L695.2 498.1 L691.7 499.6 L688.8 501.5 Z M693.3 506.8 L691.5 505.7 L691.6 502.1 L690.8 498.2 L692.8 494.6 L693.1 490.6 L695.2 490.9 L697.5 487.4 L698.3 490.6 L699.3 494.9 L697.1 498.9 L696.9 502.4 L694.9 505.3 Z M682.3 489.6 L680.7 488.5 L682.5 487.2 L685.3 485.3 L688.1 486.0 L690.3 485.7 L691.1 486.7 L691.6 488.1 L689.2 489.2 L687.3 491.5 L684.3 490.8 L682.2 491.1 Z M678.8 473.2 L677.5 470.4 L681.4 471.0 L685.2 470.4 L687.0 473.4 L689.7 474.4 L691.2 476.6 L690.1 478.4 L686.6 477.9 L683.0 478.6 L680.6 476.1 L677.3 475.0 Z M679.1 471.8 L678.8 469.2 L682.9 471.3 L686.0 470.2 L688.5 472.8 L692.2 474.6 L690.3 476.4 L688.4 477.4 L686.2 477.0 L682.7 478.2 L680.3 475.1 L677.4 473.4 Z M682.4 484.1 L682.4 483.0 L684.8 482.8 L685.6 481.0 L687.4 482.0 L689.8 481.0 L689.8 482.2 L690.4 483.3 L688.0 483.7 L686.6 484.8 L684.7 484.7 L682.1 485.6 Z M705.5 455.2 L707.3 454.1 L708.3 456.5 L710.8 459.9 L708.1 462.9 L708.0 466.1 L706.1 465.9 L704.2 466.5 L703.4 463.7 L701.6 460.4 L702.6 456.5 L703.4 453.9 Z M714.3 457.5 L717.0 458.5 L713.6 461.8 L713.3 464.8 L710.4 466.4 L707.2 469.4 L705.4 467.3 L705.3 464.5 L706.4 462.3 L706.9 459.0 L710.2 457.7 L712.9 455.3 Z M702.8 461.8 L703.7 460.7 L704.3 462.0 L705.6 463.9 L704.6 465.8 L704.6 467.0 L703.7 467.3 L702.8 468.1 L702.6 466.0 L701.1 464.6 L702.0 462.8 L701.5 460.6 Z M727.7 475.0 L728.0 476.8 L722.9 477.9 L720.8 480.4 L716.6 480.8 L712.1 481.9 L712.6 479.5 L713.5 477.6 L715.7 476.4 L718.9 473.7 L722.9 474.5 L727.0 473.3 Z M723.1 476.9 L722.6 478.5 L720.3 479.0 L718.8 481.5 L715.4 481.2 L713.0 481.1 L713.5 479.3 L712.6 477.9 L715.5 477.3 L717.1 474.8 L719.8 476.0 L723.5 474.9 Z M723.3 489.0 L722.4 490.1 L720.0 488.3 L717.4 488.2 L717.0 485.6 L715.1 484.2 L716.0 483.4 L716.0 481.4 L718.1 482.6 L720.7 483.9 L721.4 486.0 L723.1 487.4 Z M716.5 500.7 L714.9 501.9 L713.4 499.0 L711.6 496.6 L712.1 494.0 L709.8 490.1 L711.8 489.5 L713.6 489.0 L714.9 492.9 L717.6 494.0 L717.4 497.2 L718.0 500.0 Z M720.1 501.3 L718.2 502.8 L715.5 499.9 L712.6 498.1 L712.9 494.8 L709.2 490.8 L711.3 489.2 L713.8 489.0 L716.2 492.1 L719.2 493.3 L720.8 496.8 L721.6 499.8 Z M703.5 501.4 L701.4 502.9 L702.2 499.8 L701.9 497.2 L703.7 495.7 L704.2 493.0 L705.4 493.8 L706.5 494.1 L706.7 495.8 L707.0 498.5 L705.2 500.3 L704.5 501.6 Z" fill="none" stroke="#5f9628" stroke-width="0.6" stroke-linejoin="round"/><path d="M705.6 479.5 L705.7 481.1 L703.8 481.5 L702.0 482.1 L700.9 480.7 L699.6 479.5 L700.9 478.3 L702.0 476.9 L703.8 477.5 L705.7 477.9 Z M704.5 480.5 L700.6 485.4 L696.3 490.0 L695.6 489.6 L698.7 484.1 L701.5 478.5 Z M699.9 485.5 L695.7 486.2 L691.6 486.8 L691.5 486.4 L695.5 485.2 L699.5 484.1 Z M702.5 481.3 L696.1 480.7 L690.0 476.7 L690.2 475.9 L696.6 478.4 L703.5 477.7 Z M696.7 480.2 L693.3 481.3 L690.0 482.4 L689.8 482.0 L693.0 480.4 L696.1 478.9 Z M701.2 479.1 L704.5 473.1 L705.7 466.4 L706.5 466.6 L706.7 473.6 L704.8 479.9 Z M704.8 473.6 L704.2 470.8 L703.6 468.0 L704.1 467.9 L705.2 470.5 L706.3 473.1 Z M703.0 477.6 L707.8 477.1 L712.9 479.0 L712.9 479.8 L707.8 479.4 L703.0 481.4 Z M708.2 477.6 L711.8 480.1 L715.4 482.7 L715.2 483.0 L711.3 481.0 L707.4 478.9 Z M704.4 478.3 L707.4 485.0 L712.5 490.2 L711.8 490.7 L705.6 486.4 L701.6 480.7 Z M707.3 485.8 L706.5 489.5 L705.8 493.2 L705.3 493.2 L705.6 489.4 L705.8 485.6 Z" fill="#5c9422" stroke="#5c9422" stroke-width="0.4" stroke-linejoin="round"/><path d=" M580.2 464.1 L576.9 464.6 L576.3 463.0 L573.8 461.8 L574.8 459.6 L573.1 457.4 L575.2 455.6 L574.5 452.8 L576.3 451.1 L576.7 448.1 L579.6 447.2 L581.2 444.9 L584.3 445.7 L586.4 445.1 L588.6 446.5 L590.6 444.9 L592.3 446.3 L595.0 444.7 L596.5 446.2 L598.9 446.3 L598.8 449.1 L600.0 450.5 L599.1 452.9 L600.5 454.3 L599.6 456.1 L601.3 458.0 L600.1 459.7 L601.5 462.6 L599.2 464.0 L598.9 467.0 L596.1 467.6 L595.1 470.7 L592.4 471.3 L590.1 473.2 L587.5 472.6 L585.1 473.6 L583.7 469.8 L582.1 469.1 L582.0 466.1 L580.5 465.7 Z M569.4 437.6 L570.7 435.5 L573.0 436.9 L574.9 435.9 L576.7 438.1 L578.7 438.4 L579.8 440.5 L581.9 440.9 L582.8 442.8 L586.0 443.1 L586.2 445.6 L587.9 447.6 L586.4 450.1 L587.6 452.1 L585.7 453.9 L586.7 456.2 L585.7 457.9 L587.1 461.6 L585.5 463.2 L584.9 466.3 L582.3 466.4 L580.3 467.8 L577.6 465.7 L575.5 465.9 L573.7 463.3 L571.5 463.5 L570.5 460.9 L568.3 460.6 L568.7 457.3 L566.8 456.4 L567.2 454.2 L564.8 453.1 L564.1 451.1 L560.8 448.8 L560.9 446.2 L560.5 443.3 L562.0 441.4 L562.3 438.7 L565.8 439.1 L566.8 437.1 Z M598.8 443.4 L600.2 445.3 L598.8 446.3 L600.0 449.3 L597.9 449.8 L597.6 452.7 L594.8 452.2 L593.2 454.2 L590.7 453.6 L588.2 455.5 L585.9 453.7 L582.9 454.6 L581.4 451.8 L578.9 451.2 L579.1 448.0 L577.1 447.0 L577.2 444.8 L574.2 443.6 L574.5 441.5 L572.5 439.4 L574.5 437.7 L574.5 435.6 L578.0 435.2 L578.7 433.5 L581.1 433.5 L581.8 431.6 L583.6 431.2 L584.8 428.6 L587.1 429.0 L589.5 427.4 L591.6 429.1 L594.5 428.3 L596.6 429.8 L599.2 430.6 L601.3 432.3 L603.4 433.9 L603.5 436.3 L603.6 438.4 L601.1 440.6 L600.6 442.2 Z M595.4 471.2 L593.2 471.8 L591.1 472.4 L589.0 473.5 L586.7 474.0 L584.4 473.1 L582.3 472.2 L580.2 471.6 L578.9 468.2 L577.0 467.8 L576.5 464.6 L574.7 464.5 L574.0 462.6 L571.6 462.8 L570.7 461.2 L567.7 461.3 L566.9 459.5 L564.0 458.7 L564.5 456.3 L562.5 454.7 L563.2 452.4 L562.0 450.5 L563.7 448.4 L562.2 446.3 L563.9 444.5 L563.0 442.2 L564.2 440.5 L563.2 437.6 L565.2 436.2 L565.9 434.1 L567.3 432.4 L568.3 430.2 L570.8 429.9 L572.2 428.0 L574.7 428.3 L576.4 426.6 L578.9 427.6 L580.7 425.8 L582.9 426.6 L585.0 425.0 L587.2 425.5 L589.4 425.9 L591.7 425.9 L594.0 426.5 L596.0 427.6 L597.7 429.3 L598.6 431.7 L599.9 433.4 L598.8 437.0 L600.3 438.2 L598.8 441.2 L599.9 442.4 L599.1 444.4 L601.3 445.5 L600.8 447.2 L603.5 448.7 L602.9 450.5 L605.2 452.7 L604.0 454.5 L605.6 457.1 L604.1 458.8 L604.9 461.7 L602.8 463.0 L602.7 465.7 L600.5 466.8 L598.9 468.2 L597.1 469.6 Z" fill="none" stroke="#5f9628" stroke-width="0.65" stroke-linejoin="round"/><path d=" M582.6 465.3 L581.8 465.5 L582.1 463.3 L580.7 462.2 L581.5 460.3 L581.7 458.7 L582.6 459.3 L583.4 459.2 L583.5 460.4 L584.4 462.2 L583.7 463.9 L583.7 466.1 Z M582.7 469.5 L581.7 468.3 L581.4 466.5 L579.7 464.9 L580.5 461.8 L580.5 458.9 L582.2 459.9 L583.1 459.0 L583.9 459.9 L585.2 461.8 L584.5 464.6 L585.1 467.6 L583.6 468.7 Z M590.0 460.6 L589.4 461.4 L588.0 460.0 L586.6 459.5 L586.2 458.2 L584.8 456.9 L585.8 456.7 L586.0 455.7 L587.2 456.8 L588.7 457.2 L589.1 458.6 L589.6 459.5 Z M570.1 460.4 L569.4 459.6 L571.0 458.0 L570.7 456.0 L572.7 455.8 L574.0 453.9 L574.7 454.7 L575.9 455.0 L574.3 456.8 L573.6 458.4 L572.2 459.3 L570.8 461.4 Z M570.6 461.3 L569.8 460.7 L571.1 458.8 L571.5 457.0 L572.9 455.8 L574.1 453.5 L574.7 454.8 L575.6 455.0 L574.4 456.8 L574.4 458.8 L572.5 459.2 L571.6 461.4 Z M567.0 453.8 L565.9 452.8 L568.4 452.5 L570.0 451.5 L571.7 452.2 L573.3 452.2 L573.8 453.0 L573.5 453.9 L572.3 454.5 L570.5 455.5 L569.1 454.3 L567.5 454.6 Z M568.1 440.9 L568.3 438.9 L570.8 439.9 L573.3 440.3 L574.7 442.4 L576.0 444.0 L575.1 445.2 L575.6 447.1 L573.9 447.3 L571.6 448.2 L570.0 445.2 L568.6 443.9 L568.1 442.2 Z M567.3 440.6 L567.0 438.2 L570.1 440.3 L572.5 440.9 L574.0 442.7 L576.1 444.1 L576.4 445.9 L576.1 447.4 L573.7 446.6 L571.7 447.2 L569.9 444.8 L567.9 443.7 L567.6 442.0 Z M566.1 445.3 L566.7 444.6 L568.1 444.9 L569.9 444.3 L571.7 445.7 L572.5 446.6 L571.6 447.1 L572.0 448.2 L570.5 447.9 L568.6 448.3 L567.4 446.9 L565.4 446.2 Z M583.0 432.6 L584.6 432.6 L584.7 436.0 L585.3 438.4 L584.1 440.4 L584.7 443.8 L583.2 444.6 L581.9 444.5 L580.9 443.3 L579.9 441.0 L580.9 438.3 L580.6 435.8 L582.1 435.3 Z M582.5 435.5 L583.9 435.1 L584.0 437.9 L584.5 439.9 L584.3 442.1 L584.1 444.8 L582.6 444.6 L581.4 444.0 L581.5 441.6 L580.1 439.9 L581.2 438.0 L581.1 435.2 Z M575.8 437.8 L576.3 436.9 L577.1 438.5 L578.4 439.1 L578.2 440.6 L579.5 442.2 L578.7 442.7 L577.7 442.5 L576.9 441.3 L575.7 440.7 L575.2 439.0 L574.6 437.6 Z M595.5 454.5 L596.6 456.5 L594.8 456.5 L591.9 456.2 L589.8 454.3 L588.2 453.1 L587.9 451.7 L587.5 450.2 L589.9 450.7 L591.5 449.4 L594.1 451.1 L596.7 452.2 L596.3 454.0 Z M595.9 454.6 L594.9 455.4 L592.9 454.7 L590.7 455.2 L588.9 453.4 L586.3 452.1 L588.6 451.4 L588.7 450.2 L590.5 450.7 L592.9 450.1 L594.6 452.1 L596.2 453.3 Z M593.9 444.9 L594.5 445.5 L593.3 446.4 L592.4 447.8 L590.5 448.4 L588.8 449.0 L588.7 447.8 L588.9 446.9 L589.8 446.1 L590.3 444.3 L592.4 444.4 L593.9 443.7 Z" fill="none" stroke="#5f9628" stroke-width="0.6" stroke-linejoin="round"/><path d="M582.5 450.2 L582.6 451.2 L581.3 451.5 L580.1 451.9 L579.4 451.0 L578.6 450.2 L579.4 449.4 L580.1 448.5 L581.3 448.9 L582.6 449.2 Z M582.0 450.0 L583.2 454.2 L582.8 458.9 L582.3 459.0 L581.8 454.5 L579.6 450.4 Z M582.8 453.9 L584.2 455.1 L585.6 456.3 L585.4 456.5 L583.8 455.6 L582.2 454.7 Z M581.5 451.2 L578.3 453.3 L574.8 455.0 L574.5 454.6 L577.4 452.1 L580.1 449.2 Z M577.9 453.2 L575.9 453.2 L573.9 453.2 L573.8 452.9 L575.8 452.5 L577.9 452.2 Z M580.0 451.2 L577.6 448.9 L575.5 446.4 L575.8 445.9 L578.6 447.7 L581.6 449.2 Z M578.0 448.8 L575.4 448.2 L572.7 447.7 L572.7 447.4 L575.5 447.6 L578.2 447.9 Z M579.6 449.9 L580.3 446.8 L582.4 443.9 L582.9 444.1 L581.8 447.2 L582.0 450.5 Z M580.6 447.2 L579.5 444.9 L578.4 442.5 L578.7 442.4 L580.1 444.6 L581.5 446.7 Z M581.0 449.0 L584.5 449.4 L587.9 450.8 L587.8 451.4 L584.3 450.9 L580.6 451.4 Z M584.1 449.8 L586.3 448.8 L588.4 447.8 L588.6 448.1 L586.6 449.4 L584.6 450.6 Z" fill="#5c9422" stroke="#5c9422" stroke-width="0.4" stroke-linejoin="round"/><path d=" M612.1 379.8 L615.7 380.9 L615.2 381.9 L612.5 382.6 L613.6 383.7 L613.2 384.7 L614.0 385.8 L614.5 387.0 L610.8 387.0 L610.2 387.8 L613.8 390.1 L611.5 390.3 L612.6 391.8 L608.8 391.1 L610.3 392.9 L611.0 394.5 L608.4 394.0 L610.9 396.9 L610.1 397.6 L606.1 395.8 L605.5 396.5 L606.7 398.9 L607.4 400.9 L604.8 399.7 L603.6 399.8 L603.5 401.2 L601.7 400.4 L601.5 401.7 L601.2 403.0 L600.5 403.8 L599.1 403.3 L598.3 403.8 L597.4 404.2 L597.0 405.5 L595.6 404.7 L594.3 403.8 L594.6 408.1 L593.3 407.0 L592.4 407.7 L591.0 405.7 L590.7 409.7 L589.5 409.3 L588.2 405.9 L587.3 407.0 L586.4 408.8 L585.3 408.8 L584.2 409.7 L583.4 407.4 L582.2 409.1 L581.3 408.2 L580.6 406.5 L579.3 407.5 L578.0 408.4 L577.1 408.0 L576.5 406.3 L575.5 406.3 L575.4 403.9 L574.2 404.3 L572.3 405.8 L572.1 404.0 L571.8 402.7 L570.2 403.4 L569.0 403.3 L568.2 402.6 L568.2 401.1 L567.2 400.6 L566.3 400.1 L564.9 400.1 L564.9 398.7 L564.6 397.6 L563.7 397.1 L564.4 395.3 L563.8 394.6 L561.3 395.0 L560.0 394.5 L560.4 393.1 L560.4 392.0 L560.5 390.9 L559.4 390.3 L557.9 389.7 L558.0 388.5 L558.3 387.4 L557.3 386.6 L558.6 385.2 L557.7 384.4 L556.5 383.5 L557.3 382.4 L557.5 381.3 L558.0 380.3 L557.3 379.3 L556.3 378.2 L558.7 377.4 L556.9 376.2 L556.9 375.1 L557.0 374.0 L557.6 373.1 L557.6 372.0 L558.6 371.2 L558.8 370.2 L559.5 369.4 L560.8 368.8 L559.3 367.1 L560.5 366.5 L561.8 366.0 L561.6 364.8 L562.2 363.9 L563.0 363.3 L563.7 362.5 L563.9 361.4 L564.4 360.5 L565.1 359.8 L566.1 359.3 L567.6 359.4 L568.0 358.4 L568.9 357.9 L569.1 356.4 L569.5 355.3 L570.5 354.8 L571.4 354.3 L572.3 353.7 L573.8 354.6 L574.1 352.8 L575.2 352.8 L576.7 353.8 L577.7 353.7 L578.7 353.4 L579.1 351.3 L580.4 352.4 L581.5 352.6 L582.3 351.1 L583.4 351.7 L584.4 352.4 L585.4 352.1 L586.4 351.1 L587.3 352.2 L588.3 352.0 L589.5 350.8 L590.4 351.7 L591.3 352.3 L592.4 352.0 L593.0 353.6 L594.2 352.9 L595.2 353.1 L595.9 354.1 L596.7 354.8 L598.6 352.8 L599.0 354.4 L599.4 355.8 L600.9 355.2 L602.2 355.1 L601.4 358.0 L602.1 358.6 L603.1 358.9 L605.3 357.9 L604.6 360.2 L606.7 359.4 L607.3 360.2 L607.6 361.3 L607.2 362.9 L610.3 361.8 L610.3 363.1 L609.9 364.6 L609.3 366.1 L611.3 366.1 L610.8 367.5 L611.9 368.1 L611.3 369.4 L612.9 369.9 L610.7 371.7 L612.0 372.2 L615.3 372.4 L615.2 373.5 L612.7 375.0 L615.4 375.6 L612.9 376.9 L616.1 377.7 L615.2 378.8 Z M612.0 379.8 L611.2 380.7 L609.9 381.5 L614.2 382.8 L609.8 383.2 L613.6 384.7 L614.1 385.9 L612.0 386.4 L609.8 386.7 L612.9 388.7 L613.0 389.8 L611.4 390.2 L610.1 390.7 L609.1 391.2 L608.6 392.0 L607.5 392.4 L609.0 394.4 L607.5 394.6 L606.0 394.6 L605.2 395.1 L606.7 397.5 L604.8 397.0 L604.9 398.4 L603.6 398.5 L604.7 401.0 L604.0 401.8 L600.7 399.1 L600.5 400.4 L600.1 401.4 L600.9 404.4 L599.6 404.1 L597.8 402.9 L596.8 402.8 L596.7 405.0 L596.1 406.0 L595.3 406.8 L593.5 404.2 L593.3 407.1 L592.1 406.4 L591.0 405.7 L590.4 408.2 L589.0 404.8 L588.3 407.2 L587.2 404.3 L586.3 404.8 L585.3 408.2 L584.5 405.0 L583.4 407.4 L582.5 406.6 L581.4 407.5 L580.8 405.3 L579.9 405.0 L579.1 404.6 L577.5 406.6 L576.9 405.3 L575.5 406.3 L574.7 405.6 L575.1 402.5 L573.5 403.6 L573.5 401.6 L572.9 401.0 L572.0 400.6 L569.5 402.6 L568.9 401.7 L568.0 401.2 L568.5 399.2 L567.1 399.3 L566.0 399.1 L566.4 397.3 L565.2 397.1 L565.6 395.6 L565.5 394.5 L564.4 394.2 L562.0 394.6 M592.1 353.2 L593.3 352.4 L593.9 354.1 L594.6 354.9 L596.0 353.7 L597.0 354.0 L596.8 356.8 L598.6 355.3 L598.5 357.5 L599.3 357.9 L601.5 356.1 L600.6 359.2 L601.7 359.2 L604.2 357.6 L603.5 359.9 L603.4 361.4 L604.2 361.9 L605.0 362.4 L607.1 361.8 L605.7 364.2 L608.9 362.9 L607.6 365.0 L610.2 364.4 L610.5 365.4 L608.7 367.6 L608.9 368.5 L610.2 368.9 L608.9 370.4 L611.6 370.3 L609.2 372.2 L609.3 373.0 L613.9 372.7 L611.0 374.4 L612.6 375.1 L612.0 376.1 L611.4 377.1 L610.3 378.1 L614.5 378.8 M587.2 402.4 L586.1 402.9 L588.0 403.1 L588.7 403.7 L587.8 403.9 L587.0 402.9 M606.3 359.5 L606.1 360.1 L606.6 361.9 L606.2 361.1 L605.5 360.4 L606.9 362.0 M611.1 374.4 L611.4 374.8 L610.4 372.9 L609.4 371.1 L609.6 369.4 L607.9 370.0 M610.6 373.7 L612.1 372.3 L612.1 373.5 L610.4 375.3 L609.1 376.4 L611.0 377.7 M576.5 406.3 L575.7 407.9 L574.3 409.5 L572.4 408.8 L574.0 410.0 L575.6 411.3 M599.7 398.5 L599.5 397.1 L600.3 397.8 L599.3 396.0 L601.2 397.3 L601.4 397.4 M594.7 402.8 L594.1 401.9 L592.2 402.5 L591.8 402.7 L590.1 402.2 L588.6 400.7 M609.4 371.9 L609.0 372.4 L608.0 370.4 L608.1 370.4 L608.7 370.1 L609.4 371.1 M609.5 370.5 L608.4 370.1 L608.6 371.7 L610.3 370.8 L610.9 369.0 L609.2 369.1 M569.2 402.0 L568.5 402.8 L569.9 402.3 L570.7 403.3 L571.1 404.7 L572.7 406.5 M585.4 403.2 L585.7 404.2 L583.9 404.9 L584.8 404.3 L584.8 403.0 L585.7 401.1 M586.6 406.0 L585.7 407.6 L587.5 406.2 L588.6 407.6 L589.3 408.4 L589.0 410.1 M587.3 407.1 L587.1 405.8 L586.4 404.3 L588.0 406.1 L586.5 406.5 L586.1 405.0 M573.2 397.5 L572.0 397.3 L570.0 397.8 L570.5 399.1 L569.3 398.3 L569.5 397.4 M571.8 403.1 L573.1 405.0 L573.3 404.9 L574.7 406.0 L575.0 405.5 L574.1 404.0 M571.1 400.6 L573.0 401.6 L574.8 400.2 L574.8 400.4 L574.1 400.5 L573.5 400.6 M599.6 358.8 L598.9 358.4 L600.0 359.2 L600.0 359.7 L599.5 358.6 L597.5 357.7 M609.5 394.3 L609.6 396.3 L609.4 397.6 L609.0 398.6 L611.0 397.8 L609.7 398.3 M606.5 387.9 L606.0 387.6 L605.6 389.1 L606.0 390.0 L607.6 391.0 L607.5 392.0 M606.7 396.0 L606.3 396.5 L606.9 398.2 L608.0 399.6 L609.1 400.9 L609.5 400.3 M612.6 371.2 L612.8 369.9 L614.1 369.8 L614.0 368.0 L614.0 369.0 L613.7 368.4 M576.7 406.5 L577.5 406.2 L578.2 406.6 L577.1 405.4 L578.6 404.5 L576.9 405.8 M609.9 388.8 L610.8 387.4 L611.4 388.3 L612.7 387.4 L613.1 386.3 L613.4 385.0 M598.0 400.8 L596.9 402.6 L597.8 404.0 L595.9 405.6 L596.4 404.9 L596.1 405.9 M575.5 400.2 L577.4 400.0 L579.0 400.9 L579.4 400.0 L579.5 398.5 L578.1 399.4 M609.6 378.4 L610.5 379.2 L609.7 377.7 L609.3 377.6 L607.7 376.4 L605.9 376.8 M592.2 405.8 L593.4 407.7 L593.9 407.0 L595.2 405.5 L596.0 403.9 L595.6 403.9 M585.9 407.3 L585.8 407.6 L584.6 408.5 L583.9 408.8 L585.6 410.8 L583.7 412.0 M594.3 402.9 L594.6 404.6 L594.2 406.1 L595.3 404.7 L596.9 402.8 L595.5 403.4 M601.1 362.7 L601.0 364.0 L602.6 362.2 L600.8 363.5 L599.0 362.6 L597.5 361.0 M602.3 358.2 L603.0 359.6 L603.7 359.1 L604.2 361.0 L604.8 360.0 L603.0 361.7 M608.5 393.1 L608.7 393.2 L607.0 392.6 L606.6 391.4 L608.1 391.1 L608.8 391.9 M602.2 401.5 L601.2 403.4 L599.8 405.1 L601.2 406.5 L599.4 404.9 L600.7 404.7 M608.3 379.0 L608.4 378.7 L606.9 378.3 L607.7 379.9 L605.8 380.0 L604.2 381.2 M581.0 406.2 L580.3 404.7 L581.4 406.0 L582.9 405.2 L582.6 404.2 L582.8 403.5 M614.3 376.4 L614.6 374.8 L615.3 374.6 L617.2 375.5 L618.6 376.3 L618.7 377.9 M595.2 400.9 L594.7 401.0 L593.1 400.3 L593.4 398.5 L594.7 399.1 L593.9 398.3 M595.2 388.3 L596.3 388.7 L597.5 388.3 L598.0 388.6 L599.4 391.2 L600.3 390.7 L601.6 393.5 L600.7 395.2 L601.9 395.8 L601.7 395.1 M582.7 391.8 L582.5 393.0 L583.3 393.3 L584.0 393.5 L584.1 394.1 L587.4 391.8 L587.3 394.0 L589.2 396.7 L588.7 397.9 L590.7 399.3" fill="none" stroke="#5f9628" stroke-width="0.7" stroke-linejoin="round"/><path d=" M557.8 489.1 L557.8 490.2 L553.2 490.9 L553.3 491.8 L556.9 493.3 L556.3 494.2 L555.7 495.1 L553.7 495.7 L554.9 497.0 L554.6 498.0 L554.2 498.9 L551.8 499.0 L552.7 500.4 L552.1 501.2 L553.2 502.9 L553.8 504.4 L553.1 505.2 L550.8 505.0 L549.9 505.5 L548.6 505.7 L547.2 505.7 L546.5 506.4 L547.4 508.6 L546.3 508.7 L545.8 509.6 L546.5 512.1 L544.7 511.4 L544.0 512.2 L542.4 511.5 L541.1 511.2 L541.0 512.9 L539.8 512.6 L539.6 514.5 L539.5 516.9 L538.0 515.8 L536.2 513.8 L536.4 517.6 L535.2 517.4 L534.2 517.3 L533.3 518.4 L532.2 517.8 L531.2 518.1 L530.0 516.2 L529.1 519.2 L528.1 519.1 L527.1 515.5 L526.0 518.1 L525.0 517.9 L524.1 516.7 L523.1 516.8 L522.1 516.5 L520.7 518.1 L520.2 516.1 L518.8 517.1 L518.5 514.9 L516.8 516.6 L515.8 516.3 L515.6 514.2 L514.5 514.2 L512.9 514.9 L512.4 513.7 L512.1 512.4 L511.8 511.0 L510.8 510.7 L509.1 511.2 L509.7 509.1 L507.1 510.4 L508.0 508.0 L505.6 508.9 L506.6 506.7 L504.1 507.3 L504.2 506.0 L504.3 504.7 L503.7 503.9 L502.6 503.4 L502.2 502.4 L502.4 501.2 L502.2 500.2 L501.1 499.5 L499.8 498.9 L500.2 497.7 L501.2 496.3 L499.2 495.8 L499.2 494.8 L498.5 493.8 L500.2 492.6 L498.7 491.7 L500.3 490.6 L498.8 489.6 L499.7 488.6 L499.9 487.6 L498.4 486.5 L500.4 485.7 L499.5 484.5 L498.9 483.4 L500.6 482.7 L500.9 481.8 L499.6 480.3 L501.0 479.7 L500.6 478.5 L502.6 478.2 L502.3 477.0 L503.1 476.3 L502.5 474.8 L504.3 474.7 L503.0 472.6 L505.5 473.1 L504.7 471.3 L506.7 471.6 L506.9 470.5 L506.5 468.8 L508.4 469.2 L509.1 468.5 L509.0 466.9 L510.3 466.8 L511.6 466.9 L511.1 464.4 L513.1 465.6 L514.1 465.3 L514.6 464.2 L515.2 463.1 L516.0 462.4 L517.5 463.5 L518.2 462.6 L519.4 463.1 L520.1 461.7 L520.9 460.7 L521.9 460.5 L522.8 459.9 L523.9 460.1 L524.9 459.7 L526.0 460.1 L527.0 460.7 L528.0 461.4 L529.1 460.2 L530.0 461.2 L530.9 462.0 L532.1 461.1 L533.3 460.0 L533.8 462.5 L535.1 461.4 L535.9 462.2 L537.0 462.2 L537.5 463.7 L539.4 461.6 L539.4 464.1 L540.8 463.5 L541.4 464.6 L541.5 466.3 L543.3 465.2 L543.3 467.1 L543.8 467.9 L544.5 468.6 L545.5 468.9 L546.0 469.7 L548.2 468.9 L548.5 470.0 L550.6 469.5 L551.1 470.5 L552.0 471.1 L550.0 473.8 L551.2 474.2 L551.0 475.4 L552.7 475.6 L553.3 476.4 L554.5 477.0 L554.5 478.1 L552.9 479.8 L553.9 480.5 L554.7 481.3 L552.5 482.8 L552.8 483.7 L554.7 484.3 L553.5 485.4 L556.5 486.0 L554.2 487.2 L553.6 488.2 Z M552.5 489.1 L552.7 490.0 L552.6 490.9 L554.0 491.9 L553.6 492.8 L552.7 493.6 L554.1 494.8 L551.8 495.2 L555.0 497.0 L554.9 498.1 L553.5 498.6 L551.7 499.0 L551.7 500.0 L551.7 501.0 L548.9 500.5 L550.1 502.2 L550.0 503.3 L548.1 503.1 L547.3 503.6 L549.5 506.4 L547.2 505.8 L547.2 507.0 L547.9 509.1 L546.2 508.7 L544.5 508.2 L545.9 511.3 L543.4 509.7 L541.7 508.9 L542.7 511.9 L540.5 510.2 L540.2 511.5 L540.5 514.0 L539.3 513.8 L537.3 511.6 L537.0 513.3 L536.1 513.5 L535.3 514.1 L534.1 513.1 L533.7 515.1 L532.3 512.9 L531.6 514.1 L530.8 514.6 L530.1 517.4 L528.9 513.5 L528.0 516.7 L527.1 514.1 L526.1 515.8 L525.3 514.9 L524.3 515.2 L523.2 516.3 L522.5 514.6 L521.9 513.3 L521.0 513.1 L520.2 512.7 L518.3 515.4 L517.7 514.3 L516.3 515.1 L515.8 513.7 L516.2 511.0 L514.2 512.7 L513.1 512.6 L512.4 511.9 L512.1 510.6 L511.7 509.7 L510.7 509.4 L509.1 509.7 L509.8 507.6 L508.4 507.6 L507.9 506.8 L506.0 507.2 L505.8 506.1 L504.8 505.6 L504.5 504.6 L505.6 502.7 M533.5 463.6 L534.6 463.1 L535.3 464.1 L536.4 463.9 L537.6 463.4 L538.8 463.1 L539.2 464.5 L540.4 464.2 L540.1 466.9 L541.3 466.6 L543.4 465.2 L542.4 468.3 L543.7 468.0 L543.6 469.7 L544.3 470.2 L547.1 468.6 L548.1 469.0 L547.8 470.7 L546.8 472.7 L547.9 473.0 L548.2 473.9 L550.2 473.6 L550.8 474.4 L550.4 475.8 L551.2 476.4 L549.9 478.1 L552.0 478.1 L554.1 478.3 L553.6 479.5 L551.1 481.4 L553.2 481.7 L554.3 482.4 L552.4 483.8 L555.6 484.1 L553.6 485.4 L554.9 486.2 L553.5 487.3 L556.5 488.1 M539.4 508.7 L539.2 506.8 L539.6 508.4 L538.3 508.4 L538.2 508.0 L539.1 509.8 M546.9 510.1 L546.2 511.1 L546.8 512.1 L548.2 511.0 L548.7 510.6 L549.4 512.6 M520.3 514.7 L521.8 515.3 L523.1 513.3 L524.8 514.3 L525.3 515.9 L526.8 514.3 M537.9 510.0 L538.9 510.3 L537.6 511.5 L536.2 512.0 L535.9 511.0 L536.2 510.9 M547.7 479.0 L545.7 479.0 L547.1 479.6 L548.1 479.6 L548.8 478.9 L547.9 478.9 M514.2 507.6 L515.2 508.8 L514.8 509.5 L515.9 510.9 L514.5 509.6 L514.0 509.4 M516.8 515.3 L516.3 515.4 L515.8 515.2 L517.3 514.4 L517.9 514.4 L518.0 516.0 M544.4 472.0 L545.0 473.1 L545.6 472.7 L547.0 471.1 L547.5 470.6 L547.7 472.0 M539.2 510.1 L538.1 510.0 L537.1 509.1 L538.9 507.5 L540.2 507.0 L539.6 506.3 M543.8 472.6 L543.6 471.8 L545.2 473.5 L544.9 474.1 L546.6 473.4 L545.0 472.3 M549.1 477.3 L548.5 478.4 L547.5 479.7 L548.0 479.3 L549.3 478.6 L550.8 480.4 M554.7 497.6 L555.7 498.6 L557.2 500.4 L558.2 502.3 L557.4 502.8 L558.1 502.3 M509.1 504.6 L509.1 506.1 L507.8 508.0 L506.3 506.1 L505.7 505.5 L507.4 507.1 M542.0 510.3 L541.0 511.6 L540.5 510.8 L541.1 509.4 L540.3 511.1 L538.7 509.6 M522.4 512.0 L521.7 511.0 L520.7 511.4 L520.0 510.9 L521.1 509.2 L519.7 510.6 M550.4 491.8 L550.5 493.1 L549.8 494.2 L550.3 493.8 L552.2 493.4 L552.1 493.8 M553.3 484.6 L553.6 484.7 L555.6 486.7 L556.9 486.5 L556.6 486.6 L554.8 485.0 M507.9 506.5 L509.5 504.8 L508.7 506.0 L506.8 504.4 L506.2 503.1 L504.8 503.8 M546.8 471.0 L545.0 472.6 L544.0 472.5 L544.2 471.1 L544.2 469.3 L543.0 471.0 M538.9 513.1 L540.4 511.7 L540.4 510.2 L538.8 508.6 L537.7 506.8 L536.6 506.4 M550.6 505.3 L551.4 505.4 L553.1 504.0 L551.5 505.3 L552.0 504.1 L551.6 503.3 M552.2 492.0 L553.3 493.3 L553.6 493.2 L552.7 494.2 L554.7 493.2 L555.5 494.0 M519.0 510.5 L517.7 510.9 L518.3 511.4 L519.3 512.2 L519.2 510.4 L520.3 511.7 M536.4 509.5 L535.2 507.9 L535.7 508.1 L534.4 509.9 L536.4 511.5 L536.2 510.7 M551.7 477.4 L550.8 479.0 L551.0 478.6 L550.7 479.5 L550.5 480.1 L549.0 481.0 M550.1 482.4 L549.4 482.5 L549.0 482.6 L550.7 481.5 L551.8 482.2 L552.9 482.0 M552.4 493.6 L551.4 492.4 L551.4 491.2 L551.2 491.5 L550.5 490.1 L550.9 491.6 M551.8 478.3 L553.3 479.1 L552.6 477.9 L553.9 477.1 L552.0 478.6 L550.8 477.8 M514.2 509.1 L514.0 508.7 L515.3 506.8 L515.6 505.3 L514.2 505.8 L513.7 504.0 M550.4 502.3 L550.4 503.5 L552.1 502.1 L551.3 504.0 L553.0 502.8 L553.8 504.3 M549.6 502.1 L548.5 500.9 L546.8 501.6 L545.3 502.1 L544.9 501.8 L546.8 501.4 M550.5 494.5 L549.3 494.6 L550.6 493.0 L552.4 493.7 L550.6 494.5 L550.2 494.6 M546.6 472.0 L547.7 472.4 L548.5 473.3 L547.4 471.4 L547.3 469.9 L545.9 469.2 M552.0 499.3 L553.7 497.7 L554.0 496.0 L554.6 495.8 L553.2 495.0 L553.9 494.9 M530.6 513.1 L532.3 513.5 L530.7 514.6 L530.2 516.4 L530.7 517.6 L532.3 517.7 M524.0 516.4 L522.1 517.0 L524.1 517.9 L525.5 516.2 L525.7 516.7 L525.4 516.3 M536.9 497.5 L536.7 497.9 L540.1 498.4 L540.2 499.7 L543.5 498.3 L542.4 498.5 L542.9 499.3 L543.8 499.9 L543.1 501.1 L546.2 502.1 M524.4 501.0 L524.9 503.0 L525.3 502.9 L524.8 503.7 L527.9 503.4 L528.0 504.1 L529.7 506.9 L528.7 506.8 L531.0 507.2 L530.5 508.8" fill="none" stroke="#5f9628" stroke-width="0.7" stroke-linejoin="round"/><path d=" M662.6 552.4 L661.9 553.2 L663.3 554.3 L662.0 555.0 L661.4 555.7 L662.8 557.0 L665.0 558.7 L664.1 559.5 L663.5 560.4 L660.7 560.0 L661.6 561.6 L660.0 561.7 L659.1 562.1 L658.4 562.6 L658.2 563.7 L660.0 566.8 L658.9 567.2 L658.0 567.7 L657.2 568.3 L654.9 566.6 L654.4 567.5 L654.2 569.2 L653.5 570.1 L652.7 571.0 L651.7 571.4 L649.8 567.8 L649.4 570.6 L648.5 571.1 L647.4 570.4 L646.4 569.0 L645.5 570.4 L644.7 568.7 L643.3 572.3 L642.3 571.8 L641.6 570.3 L641.0 569.1 L639.2 571.2 L638.8 569.5 L637.3 570.2 L636.5 569.6 L636.3 568.0 L635.6 567.2 L634.4 567.2 L634.1 566.0 L634.0 564.7 L633.0 564.4 L630.9 564.9 L632.5 562.4 L632.0 561.7 L629.5 562.1 L629.8 560.8 L628.8 560.2 L628.5 559.2 L628.5 558.2 L626.6 557.7 L628.4 556.2 L627.6 555.4 L628.0 554.3 L626.9 553.4 L627.7 552.4 L627.6 551.4 L626.7 550.3 L627.9 549.5 L627.5 548.4 L626.9 547.2 L629.1 546.8 L629.5 545.9 L629.5 544.9 L628.7 543.4 L629.5 542.7 L630.9 542.4 L631.2 541.4 L632.1 540.9 L632.2 539.7 L633.7 539.7 L633.3 537.9 L633.8 536.8 L634.5 536.1 L635.7 535.9 L636.3 534.9 L638.3 536.6 L638.9 535.6 L639.2 533.6 L640.4 533.7 L641.6 534.4 L642.3 532.8 L643.5 533.5 L644.4 532.9 L645.5 534.3 L646.5 534.6 L647.5 533.9 L648.3 535.0 L649.4 534.4 L650.8 532.9 L651.2 535.1 L651.8 536.4 L652.6 536.7 L653.6 536.7 L655.4 535.4 L655.5 537.2 L656.2 537.9 L656.4 539.1 L659.3 537.2 L658.6 539.5 L658.6 540.8 L658.7 541.9 L659.2 542.6 L660.0 543.1 L662.3 542.8 L660.7 544.7 L660.6 545.8 L662.8 545.8 L662.1 547.1 L665.7 547.0 L661.9 549.0 L663.9 549.5 L665.2 550.3 L663.5 551.5 Z M664.9 552.4 L662.3 553.3 L661.0 554.0 L661.8 554.9 L659.7 555.4 L661.4 556.6 L660.4 557.2 L663.1 559.1 L662.5 559.9 L660.6 560.0 L658.1 559.5 L658.7 560.8 L658.2 561.5 L657.6 562.0 L657.2 562.7 L658.8 565.5 L655.8 563.6 L654.9 563.8 L656.7 567.6 L655.0 566.7 L655.1 568.9 L653.1 567.0 L653.2 569.4 L651.8 568.6 L651.2 569.5 L650.2 569.6 L649.0 568.6 L647.9 566.8 L647.2 567.5 L646.5 570.7 L645.5 570.8 L644.5 570.9 L643.9 568.2 L642.8 569.5 L641.7 569.9 L641.0 569.0 L639.9 569.4 L639.4 568.0 L638.4 568.1 L637.5 567.8 L637.5 565.9 L635.4 567.5 L634.5 567.0 L635.9 563.9 L633.0 565.8 L632.3 565.0 L632.5 563.6 L633.7 561.5 L630.7 562.6 M649.8 536.9 L651.4 534.6 L652.0 535.8 L652.1 538.0 L653.0 538.1 L654.5 537.1 L655.1 537.8 L656.2 537.8 L657.4 537.9 L656.4 540.5 L656.4 541.7 L659.6 539.9 L657.4 543.0 L660.7 541.5 L658.6 544.1 L661.5 543.2 L661.9 544.1 L662.7 544.8 L661.7 546.3 L663.4 546.6 L660.6 548.4 L663.0 548.7 L661.5 549.9 L664.3 550.4 L663.8 551.5 M660.3 555.7 L658.5 556.1 L658.4 557.5 L658.8 556.1 L658.3 557.2 L658.4 555.2 M651.7 566.2 L651.9 565.7 L653.1 565.0 L652.0 564.9 L653.9 563.3 L652.3 563.8 M650.4 568.3 L651.8 569.5 L650.1 571.0 L648.9 570.2 L650.2 569.9 L651.4 568.5 M647.5 569.1 L646.9 569.3 L648.5 570.2 L646.5 569.4 L646.7 569.3 L647.6 569.3 M635.0 564.3 L636.1 566.2 L636.6 566.9 L637.0 566.2 L638.7 566.1 L640.3 565.3 M651.4 568.9 L651.1 567.5 L652.2 566.9 L652.9 565.4 L651.2 564.0 L652.4 562.7 M649.8 569.2 L649.3 569.6 L647.6 569.2 L649.4 568.0 L650.0 567.3 L649.2 565.4 M656.7 537.5 L657.9 538.7 L659.7 537.4 L660.1 537.4 L660.4 539.1 L661.4 541.0 M659.5 541.1 L660.5 541.6 L661.8 540.8 L663.6 540.4 L663.9 542.0 L664.8 541.2 M662.0 545.6 L664.0 547.2 L663.6 546.8 L664.9 545.9 L664.5 544.0 L663.3 544.1 M657.3 564.1 L659.1 564.6 L657.7 562.8 L659.6 564.8 L661.3 565.2 L660.5 563.6 M632.1 564.8 L633.2 563.4 L632.2 562.6 L634.0 561.2 L635.1 562.0 L635.3 563.8 M660.5 547.6 L658.9 545.7 L658.2 544.2 L656.4 546.2 L655.6 547.8 L656.4 548.7 M660.2 564.4 L661.0 564.6 L661.8 565.5 L662.0 565.5 L660.6 566.9 L660.6 565.2 M659.3 544.0 L658.9 544.7 L660.3 544.0 L659.9 543.7 L658.0 545.2 L656.1 547.1 M633.6 565.8 L632.5 566.0 L632.4 566.9 L631.1 568.2 L633.1 569.0 L634.8 570.8 M664.4 552.2 L664.7 550.6 L665.2 552.2 L664.4 552.8 L666.0 553.2 L664.1 553.7 M662.6 546.6 L661.8 548.2 L662.3 547.6 L663.7 549.1 L665.2 550.7 L665.9 551.5 M662.0 562.7 L661.4 561.0 L662.3 561.0 L662.5 561.4 L661.5 560.2 L659.8 561.4 M649.1 567.2 L651.0 568.5 L651.1 566.5 L652.5 567.0 L652.9 565.1 L653.9 563.2 M643.0 570.8 L644.0 572.0 L643.2 571.6 L643.6 569.7 L643.3 571.6 L644.3 573.1 M663.7 548.4 L664.5 548.1 L663.2 546.2 L664.8 547.9 L663.9 549.0 L663.5 549.5 M652.5 568.5 L651.5 568.6 L649.6 567.6 L648.8 569.3 L647.3 570.3 L645.6 572.3 M646.3 571.2 L647.0 572.8 L647.0 571.2 L646.4 571.0 L648.3 569.7 L647.3 571.1 M652.1 558.0 L651.6 559.3 L651.8 560.8 L651.7 561.4 L651.8 560.7 L653.1 561.8 L653.4 563.1 L655.9 562.0 L656.2 564.3 L655.1 563.7 M643.7 560.4 L643.9 561.4 L644.1 561.0 L645.3 561.3 L645.4 562.6 L646.4 563.2 L646.2 562.8 L647.5 562.3 L647.5 563.3 L647.7 564.3" fill="none" stroke="#5f9628" stroke-width="0.7" stroke-linejoin="round"/><path d="M462.7 450.2 L462.7 453.3 L460.8 455.8 L459.2 458.6 L455.9 458.8 L453.1 460.3 L450.1 459.3 L447.0 458.5 L445.6 455.7 L443.9 453.2 L443.9 450.2 L443.2 447.0 L445.9 445.0 L447.3 442.3 L450.1 441.0 L453.1 440.3 L455.9 441.7 L458.9 442.3 L460.9 444.6 L462.4 447.2 Z M453.4 450.9 L453.0 450.4 L453.8 447.6 L456.2 451.7 L456.4 446.1 L460.5 450.9 L458.6 447.6 L460.5 447.8 M453.0 449.4 L454.2 450.9 L457.0 451.8 L457.1 453.5 L456.6 452.6 L458.0 455.7 L455.3 458.3 L462.6 449.0 M454.2 450.3 L451.6 452.0 L454.9 451.4 L456.9 451.3 L454.8 454.9 L455.1 454.1 L458.0 454.6 L461.0 455.5 M452.6 449.3 L453.2 450.5 L453.5 451.8 L454.3 454.5 L452.3 454.3 L452.1 457.7 L448.8 456.6 L456.8 457.4 M454.0 449.9 L451.5 451.7 L450.5 452.7 L453.8 454.6 L451.5 454.5 L447.7 451.3 L452.0 456.3 L443.1 453.8 M452.9 450.4 L451.4 449.6 L451.9 453.3 L450.7 451.3 L449.7 454.3 L449.7 454.2 L444.8 450.5 L444.0 452.6 M452.1 451.0 L450.8 450.1 L451.6 449.7 L449.0 447.9 L448.3 451.0 L446.3 450.9 L445.2 447.9 L444.0 447.8 M453.1 449.8 L452.3 451.2 L450.5 450.1 L452.5 446.7 L450.2 447.1 L448.8 447.0 L447.9 444.2 L444.3 447.7 M452.3 451.2 L453.5 449.4 L455.4 446.8 L452.9 447.3 L448.9 445.1 L449.0 442.9 L447.5 445.5 L452.3 441.8 M453.6 450.2 L454.7 448.8 L455.2 447.8 L451.1 445.8 L451.6 443.8 L457.5 445.3 L449.7 444.2 L459.9 444.7 M452.6 450.0 L453.6 448.5 L454.5 449.6 L455.7 448.5 L455.5 447.4 L458.2 447.4 L459.4 444.3 L463.1 448.3 M458.0 449.6 L459.2 452.9 L455.1 453.1 L454.1 457.8 L451.5 452.8 L447.5 455.6 L447.2 452.0 L444.2 449.6 L449.2 448.1 L447.5 443.6 L451.2 444.8 L453.9 442.3 L454.6 446.7 L459.9 445.9 Z M456.1 449.4 L457.1 452.0 L454.4 451.3 L452.3 452.5 L452.8 449.9 L449.9 447.9 L453.0 447.7 L454.7 445.7 L455.6 448.2 Z" fill="none" stroke="#5f9628" stroke-width="0.8" stroke-linejoin="round"/><path d="M491.3 447.2 L492.0 450.3 L490.0 452.7 L488.2 455.2 L485.2 455.7 L482.4 457.4 L479.5 456.3 L476.5 455.3 L474.9 452.6 L473.2 450.2 L473.6 447.2 L473.0 444.2 L474.9 441.7 L476.8 439.5 L479.5 438.2 L482.4 437.5 L485.2 438.6 L488.0 439.5 L490.2 441.5 L492.1 444.1 Z M482.7 446.1 L483.7 446.0 L483.7 448.0 L484.2 451.0 L487.7 447.5 L487.7 447.0 L487.3 453.3 L492.8 446.8 M483.0 447.4 L481.8 448.2 L482.4 450.9 L483.3 450.5 L486.1 451.9 L486.3 449.3 L488.0 453.8 L489.4 453.9 M482.7 447.3 L481.9 447.3 L485.6 448.5 L483.5 449.4 L488.2 449.9 L487.5 452.4 L484.2 454.6 L483.1 456.5 M482.4 446.9 L483.6 447.4 L484.0 450.6 L482.2 449.4 L481.6 452.1 L481.6 453.1 L477.7 452.6 L478.6 457.2 M482.9 446.1 L483.1 449.4 L480.3 447.7 L480.6 449.2 L478.1 451.7 L482.7 455.1 L482.2 455.4 L474.2 449.5 M483.5 448.2 L480.3 446.9 L480.9 448.2 L479.1 445.3 L476.9 448.6 L476.6 450.5 L476.3 451.2 L478.0 455.9 M483.1 446.0 L479.8 447.5 L480.5 446.4 L478.9 443.2 L476.9 447.0 L476.1 446.3 L477.5 440.7 L475.1 444.7 M482.9 447.3 L480.1 447.3 L481.5 444.1 L480.6 442.0 L478.3 447.3 L477.7 441.7 L477.7 441.0 L474.6 441.3 M482.2 446.6 L483.3 446.6 L480.4 444.5 L481.2 445.2 L478.0 444.4 L482.9 441.7 L481.4 440.2 L483.8 438.8 M483.4 446.9 L484.0 447.5 L482.9 445.1 L482.1 442.2 L482.8 441.7 L488.2 443.1 L481.8 440.4 L480.6 438.7 M481.8 448.3 L482.6 447.5 L484.5 444.1 L485.3 445.6 L487.4 447.8 L487.9 444.3 L487.9 441.7 L489.8 449.8 M486.5 447.6 L489.7 450.7 L485.3 450.2 L484.9 454.8 L482.1 452.8 L479.3 452.5 L480.4 449.0 L476.1 447.6 L480.1 446.1 L479.2 442.5 L482.3 443.2 L485.1 439.6 L485.9 444.3 L488.7 445.0 Z M485.0 447.8 L485.1 449.7 L483.2 449.1 L481.1 451.0 L481.0 448.6 L479.9 446.7 L481.6 445.5 L483.8 443.2 L485.3 445.9 Z" fill="none" stroke="#5f9628" stroke-width="0.8" stroke-linejoin="round"/><path d="M519.6 436.7 L519.1 439.7 L517.0 441.9 L516.0 445.1 L512.7 445.2 L509.9 446.3 L507.0 445.6 L504.1 444.6 L502.1 442.3 L500.7 439.7 L500.2 436.7 L500.6 433.7 L502.4 431.2 L503.8 428.3 L507.0 427.8 L509.9 426.4 L512.8 427.7 L515.5 429.0 L517.7 431.1 L519.4 433.6 Z M509.2 437.5 L512.6 437.6 L512.3 438.6 L513.0 438.3 L515.6 436.3 L515.2 438.4 L516.6 436.2 L517.4 437.4 M509.9 436.5 L512.1 437.0 L512.5 437.1 L513.0 439.0 L513.5 439.1 L511.3 442.6 L518.3 441.4 L517.1 440.4 M509.1 436.8 L509.9 437.4 L509.9 438.9 L509.5 439.5 L508.1 441.5 L509.5 442.8 L507.7 444.2 L512.1 446.5 M510.4 437.0 L510.9 439.0 L510.6 437.6 L509.8 440.0 L512.2 441.4 L509.7 444.5 L509.3 443.5 L513.0 444.5 M508.9 436.6 L509.2 438.7 L508.6 436.2 L509.5 438.8 L509.0 441.4 L505.4 440.4 L507.3 443.5 L510.7 444.6 M510.3 435.6 L508.9 435.3 L505.8 437.7 L507.5 440.9 L504.4 434.6 L503.9 441.3 L501.2 433.4 L499.9 436.4 M510.0 436.4 L509.3 434.6 L506.3 437.2 L507.2 435.7 L507.0 431.6 L507.5 430.8 L503.2 430.4 L500.6 436.8 M511.0 435.9 L510.3 436.0 L509.2 433.1 L510.2 433.8 L507.4 430.3 L504.0 435.5 L508.6 429.4 L506.1 429.8 M510.4 437.7 L511.1 435.0 L508.6 432.8 L511.8 432.3 L507.9 431.4 L508.1 430.2 L509.5 430.0 L508.7 429.0 M509.6 435.6 L511.2 435.5 L509.5 433.6 L509.2 434.5 L513.4 434.5 L515.7 432.5 L513.1 431.2 L516.4 431.0 M510.3 437.4 L510.5 435.3 L508.7 433.0 L513.2 432.8 L513.6 433.1 L511.6 430.5 L512.5 430.4 L518.1 434.3 M514.4 436.0 L517.5 439.7 L513.0 439.8 L511.8 443.9 L509.1 439.9 L504.9 442.5 L505.0 438.4 L503.8 436.0 L505.7 434.0 L505.3 430.1 L508.9 431.3 L511.7 428.8 L512.4 433.0 L516.5 432.9 Z M511.3 437.3 L513.5 440.5 L510.0 439.4 L508.0 440.1 L507.9 437.9 L506.8 436.3 L508.3 435.1 L510.1 434.5 L511.3 435.9 Z" fill="none" stroke="#5f9628" stroke-width="0.8" stroke-linejoin="round"/><path d="M650.5 415.7 L650.8 418.9 L648.7 421.3 L646.5 423.5 L643.8 424.6 L640.9 425.6 L638.0 424.5 L635.2 423.5 L633.6 421.0 L631.5 418.8 L631.9 415.7 L631.5 412.6 L633.8 410.5 L635.3 407.9 L638.0 406.7 L640.9 405.8 L643.8 406.9 L646.9 407.5 L648.3 410.3 L650.0 412.7 Z M641.1 416.1 L643.6 415.7 L642.7 417.2 L643.9 415.9 L646.7 416.7 L647.8 415.3 L647.8 414.6 L648.4 412.1 M640.4 415.9 L641.3 416.2 L642.9 416.6 L643.7 415.8 L645.5 420.0 L647.5 416.6 L649.4 417.8 L644.7 422.8 M641.6 416.1 L641.9 418.4 L644.0 418.5 L645.5 417.6 L644.2 417.7 L648.1 419.8 L646.6 419.2 L649.4 420.2 M640.7 416.7 L640.5 418.2 L641.1 418.6 L642.0 420.6 L639.1 420.1 L642.6 422.3 L641.4 422.2 L638.8 424.8 M640.3 416.8 L640.7 417.1 L639.8 417.8 L638.7 416.7 L638.3 418.3 L633.6 417.2 L637.3 422.4 L638.6 424.2 M641.0 415.8 L639.0 417.2 L640.2 418.6 L638.0 416.9 L635.1 415.3 L634.3 419.6 L633.4 418.4 L632.1 413.5 M640.4 414.7 L638.9 417.2 L637.1 415.2 L637.5 417.0 L636.0 413.7 L636.2 417.5 L635.1 418.7 L630.8 417.3 M641.5 415.4 L639.4 413.4 L640.4 412.2 L641.1 411.0 L636.1 414.9 L637.0 411.2 L635.9 411.7 L634.6 409.0 M639.9 416.6 L639.8 414.2 L640.5 414.3 L638.8 412.7 L642.2 409.9 L643.6 410.9 L634.6 411.7 L640.3 406.4 M641.5 415.8 L640.8 413.0 L641.4 414.3 L643.1 411.9 L643.0 410.6 L642.6 409.5 L648.3 413.4 L645.3 409.0 M641.3 415.5 L642.8 414.3 L641.8 413.1 L645.9 414.8 L646.6 415.0 L646.0 409.9 L648.6 414.6 L645.7 409.1 M644.3 416.0 L646.9 419.2 L643.6 420.2 L641.8 423.2 L639.1 420.6 L636.3 420.8 L636.4 417.8 L631.7 416.0 L636.6 414.3 L636.2 411.0 L639.2 411.4 L641.8 408.9 L643.7 411.6 L646.0 413.2 Z M644.5 414.7 L644.9 417.4 L642.3 417.6 L640.3 417.4 L639.5 415.6 L637.2 413.0 L640.6 412.7 L642.3 411.8 L644.1 412.8 Z" fill="none" stroke="#5f9628" stroke-width="0.8" stroke-linejoin="round"/><path d="M642.5 442.6 L642.9 445.8 L640.3 447.9 L639.2 451.0 L635.9 451.1 L633.1 452.7 L630.4 451.0 L627.1 450.8 L625.9 447.8 L623.5 445.7 L623.7 442.6 L623.4 439.4 L625.7 437.2 L627.1 434.3 L630.1 433.4 L633.1 433.0 L636.0 433.8 L639.2 434.2 L640.7 437.0 L642.5 439.5 Z M634.2 441.6 L635.4 441.8 L634.9 441.8 L638.0 442.8 L639.2 439.3 L638.6 439.5 L642.0 446.3 L642.0 440.1 M633.1 441.8 L634.3 442.9 L633.3 444.8 L636.0 446.0 L638.7 441.7 L639.1 445.5 L638.5 447.7 L638.6 448.0 M632.9 443.5 L633.6 442.1 L633.6 444.8 L631.7 448.0 L634.5 447.9 L634.6 448.5 L637.9 447.5 L639.6 450.9 M631.9 442.0 L633.3 443.6 L633.4 444.2 L633.7 445.9 L630.1 445.5 L630.6 449.9 L628.2 449.7 L634.5 450.4 M633.9 441.5 L632.2 443.9 L634.9 446.1 L632.5 445.3 L629.5 448.2 L631.0 447.6 L628.2 449.2 L631.8 452.3 M632.7 441.9 L630.8 444.8 L631.9 442.7 L628.4 441.7 L628.5 442.7 L626.6 444.0 L627.8 446.4 L623.6 444.5 M632.3 441.5 L632.8 443.4 L629.7 441.9 L630.8 439.4 L627.2 443.2 L628.8 438.8 L626.9 439.7 L623.4 441.7 M633.1 442.2 L631.8 443.3 L631.4 440.7 L629.1 440.0 L635.4 436.9 L633.9 436.4 L627.5 437.0 L630.6 432.6 M633.9 443.5 L633.0 442.1 L631.2 440.7 L632.6 439.9 L629.5 440.6 L627.7 437.4 L630.3 436.8 L631.0 435.0 M632.7 441.6 L632.8 442.1 L633.9 440.9 L635.8 440.4 L637.2 437.4 L636.3 435.9 L637.4 436.5 L641.1 436.7 M633.2 443.2 L632.9 442.0 L635.5 441.7 L637.5 442.5 L639.5 442.4 L636.5 438.5 L641.2 440.6 L638.8 435.0 M636.3 443.5 L640.0 447.2 L635.6 447.5 L634.4 451.8 L631.3 448.9 L628.6 448.4 L629.0 445.2 L624.3 443.5 L628.4 441.6 L628.1 438.0 L631.3 438.3 L634.1 436.3 L635.8 439.4 L638.9 440.4 Z M633.7 443.0 L636.1 445.9 L633.1 445.7 L631.1 445.7 L631.9 443.3 L628.1 441.4 L632.0 442.0 L633.3 439.1 L633.8 442.1 Z" fill="none" stroke="#5f9628" stroke-width="0.8" stroke-linejoin="round"/><path d="M635.7 473.9 L636.4 477.1 L634.3 479.5 L632.3 481.7 L629.6 483.0 L626.6 484.0 L623.9 482.3 L620.5 482.3 L619.3 479.2 L617.3 476.9 L617.4 473.9 L617.1 470.8 L619.4 468.7 L620.6 465.7 L623.7 464.8 L626.6 463.9 L629.5 464.9 L632.5 465.8 L634.3 468.3 L635.8 470.9 Z M626.5 472.9 L628.1 473.3 L628.9 473.0 L629.7 470.5 L631.8 472.7 L631.0 475.6 L632.9 476.4 L635.4 473.9 M626.6 472.8 L626.6 473.5 L629.9 475.4 L629.9 474.9 L629.9 476.0 L631.7 474.9 L630.9 479.9 L637.0 474.2 M626.8 474.2 L627.1 474.4 L628.0 476.6 L628.6 478.4 L632.2 475.6 L628.5 480.4 L629.3 479.2 L628.3 481.3 M626.8 472.8 L625.1 476.3 L628.0 476.8 L627.3 479.1 L622.5 477.7 L625.2 480.6 L621.3 480.4 L621.2 478.9 M627.6 473.5 L627.6 474.4 L625.4 475.1 L624.4 478.4 L625.1 480.1 L625.5 480.3 L627.7 482.2 L617.9 477.7 M626.6 473.6 L624.9 474.0 L624.9 473.4 L623.6 476.1 L624.4 478.5 L624.7 480.1 L620.4 475.3 L619.1 475.1 M627.4 475.1 L626.7 475.6 L625.2 476.3 L621.6 474.0 L621.0 478.2 L619.1 473.6 L618.3 473.8 L617.5 471.2 M627.8 473.4 L626.3 472.8 L624.1 472.2 L623.7 473.2 L620.6 473.6 L619.2 473.1 L621.5 468.6 L622.8 464.5 M627.6 473.1 L624.6 472.7 L627.3 470.8 L626.1 471.6 L623.3 470.5 L623.3 466.9 L619.0 469.7 L622.2 465.5 M625.5 473.6 L627.0 472.8 L627.4 471.3 L627.5 469.3 L630.9 470.0 L626.0 468.4 L626.3 466.5 L626.6 465.3 M627.6 475.0 L627.8 473.3 L628.6 473.6 L631.4 472.0 L630.9 473.0 L633.1 469.7 L634.2 475.9 L630.8 467.6 M632.3 473.5 L632.7 476.4 L630.1 478.0 L628.1 480.5 L625.7 476.7 L622.8 478.1 L621.3 476.0 L618.2 473.5 L623.2 471.9 L621.1 466.8 L625.2 467.9 L628.1 466.5 L629.9 469.2 L632.9 470.3 Z M627.3 473.5 L629.4 476.6 L625.9 474.9 L623.5 477.3 L623.5 474.3 L622.9 472.5 L624.7 471.9 L626.4 469.5 L627.6 471.9 Z" fill="none" stroke="#5f9628" stroke-width="0.8" stroke-linejoin="round"/><path d="M642.5 506.3 L642.2 509.3 L640.3 511.6 L638.9 514.4 L635.7 514.7 L633.0 516.5 L630.1 515.3 L627.4 514.0 L625.4 511.8 L623.5 509.4 L623.6 506.3 L623.1 503.1 L625.2 500.6 L627.2 498.3 L630.0 497.2 L633.0 496.1 L636.0 497.1 L638.6 498.6 L640.8 500.6 L642.2 503.3 Z M633.2 507.1 L633.7 507.9 L636.1 503.7 L635.6 504.2 L636.5 502.4 L640.4 507.5 L639.5 509.5 L642.0 501.1 M633.0 505.2 L634.4 506.9 L635.3 505.6 L636.9 508.1 L636.0 510.1 L636.3 512.4 L639.4 504.6 L640.8 507.3 M634.0 506.9 L634.5 508.2 L634.6 507.9 L635.1 508.0 L636.9 511.2 L633.4 513.0 L632.1 512.5 L637.6 513.4 M632.2 505.3 L631.5 506.1 L632.4 507.3 L631.1 511.1 L632.7 511.1 L638.5 511.1 L634.8 513.8 L627.9 514.9 M633.0 506.7 L633.2 505.4 L631.3 507.3 L630.8 508.7 L627.6 511.1 L625.9 508.1 L624.7 509.9 L631.7 515.7 M633.7 507.4 L630.4 505.7 L632.0 507.2 L628.7 507.3 L627.8 509.3 L627.4 504.5 L627.5 510.0 L625.5 507.0 M631.9 505.7 L630.8 503.9 L630.0 505.6 L628.3 505.9 L629.3 502.0 L628.4 502.8 L624.1 510.1 L622.8 507.5 M634.2 506.9 L634.2 503.7 L631.9 504.8 L633.2 501.2 L631.5 502.6 L627.7 503.8 L626.2 501.9 L630.3 497.5 M633.5 505.8 L634.1 505.5 L630.6 504.0 L630.8 503.8 L630.6 502.1 L630.5 499.3 L625.7 500.5 L634.0 496.3 M632.4 506.7 L632.6 503.8 L634.6 503.9 L635.9 503.0 L636.5 502.0 L637.5 500.9 L634.2 500.6 L632.9 496.8 M633.9 507.3 L635.3 505.5 L636.6 506.0 L635.0 504.3 L637.8 504.0 L639.0 507.1 L638.4 501.6 L642.4 502.4 M638.1 506.4 L639.7 509.8 L634.7 508.9 L634.3 513.4 L631.4 512.1 L628.3 511.9 L629.4 508.0 L626.7 506.4 L628.4 504.3 L627.7 500.1 L631.5 501.1 L634.2 499.8 L634.8 503.8 L638.6 503.6 Z M634.9 506.3 L635.6 508.3 L633.5 508.1 L631.6 509.0 L631.0 507.1 L630.3 505.2 L632.6 505.3 L634.0 501.4 L633.8 505.7 Z" fill="none" stroke="#5f9628" stroke-width="0.8" stroke-linejoin="round"/><path d="M537.8 543.5 L538.0 546.6 L536.2 549.2 L534.1 551.3 L531.1 551.9 L528.4 553.8 L525.6 552.1 L522.6 551.5 L520.7 549.1 L519.2 546.5 L518.8 543.5 L518.9 540.4 L521.2 538.3 L522.3 535.1 L525.5 534.6 L528.4 533.9 L531.3 534.4 L534.4 535.2 L536.1 537.9 L538.0 540.4 Z M527.2 544.6 L528.7 544.5 L531.5 544.3 L530.8 544.4 L534.3 545.0 L533.5 546.5 L534.1 549.4 L538.8 540.5 M528.0 543.7 L528.8 544.1 L528.9 545.4 L529.0 546.5 L532.2 546.0 L531.2 548.0 L533.7 546.8 L536.5 545.5 M527.9 543.4 L529.1 546.0 L531.0 545.6 L528.1 545.7 L533.5 545.9 L528.1 550.1 L531.6 548.9 L527.4 553.0 M527.7 542.8 L527.0 544.1 L526.2 547.0 L530.4 546.6 L529.8 549.5 L530.9 550.7 L531.7 549.9 L527.9 552.2 M527.7 544.3 L529.0 546.4 L527.7 544.0 L526.1 545.0 L525.3 546.8 L524.2 550.6 L527.6 551.8 L530.5 553.8 M528.5 544.3 L526.2 545.0 L526.5 545.2 L524.1 543.4 L524.9 545.5 L522.7 547.0 L522.6 540.9 L522.7 550.5 M527.3 544.2 L528.2 545.2 L526.0 542.8 L525.1 545.0 L526.4 539.8 L525.0 537.3 L523.6 536.1 L523.3 538.2 M529.1 542.8 L527.8 544.2 L525.4 542.2 L523.7 541.7 L522.8 542.8 L521.9 541.2 L521.8 544.0 L524.5 535.8 M529.1 543.7 L528.3 541.5 L528.9 541.4 L530.2 538.4 L530.5 538.5 L525.8 536.6 L529.9 534.3 L526.4 535.4 M527.4 542.4 L527.2 541.2 L531.0 540.3 L530.1 540.5 L532.4 541.1 L529.6 537.4 L535.8 538.6 L528.8 534.3 M527.5 543.3 L529.3 544.1 L530.6 543.2 L530.3 539.7 L531.3 539.8 L533.5 541.4 L536.8 543.0 L536.4 540.0 M533.9 544.2 L535.4 547.2 L532.9 548.9 L530.8 551.3 L527.9 550.2 L525.7 548.6 L524.6 546.4 L522.9 544.2 L524.4 541.9 L524.0 537.7 L528.5 541.1 L530.9 536.8 L532.7 539.8 L535.5 541.2 Z M530.1 543.5 L530.7 546.1 L528.0 545.6 L525.9 546.5 L526.2 544.0 L524.6 542.4 L526.4 541.3 L528.1 540.8 L529.3 542.1 Z" fill="none" stroke="#5f9628" stroke-width="0.8" stroke-linejoin="round"/><path d="M515.9 563.3 L516.2 566.3 L514.5 568.8 L512.7 571.1 L509.8 571.8 L507.0 573.2 L504.2 572.0 L501.3 571.1 L499.6 568.7 L497.2 566.5 L498.1 563.3 L497.8 560.3 L499.9 558.1 L501.3 555.4 L504.3 554.9 L507.0 552.9 L509.8 554.7 L513.1 554.9 L514.2 558.1 L516.8 560.1 Z M507.5 563.7 L507.4 563.5 L507.7 562.9 L510.0 564.1 L510.6 564.9 L512.3 562.2 L514.0 559.6 L515.5 561.0 M507.9 563.7 L507.1 564.6 L510.0 564.1 L509.8 565.3 L511.8 567.0 L511.9 568.6 L510.1 570.5 L513.2 570.1 M507.9 562.8 L509.5 562.5 L508.9 565.1 L508.0 567.1 L513.5 564.4 L510.6 566.9 L512.8 567.1 L513.9 569.6 M507.6 562.6 L507.8 564.4 L507.9 567.0 L505.7 566.3 L508.9 567.7 L504.6 569.7 L507.7 572.1 L504.1 571.9 M506.7 563.2 L506.6 562.5 L504.9 565.1 L503.9 563.5 L503.0 566.0 L505.5 568.4 L499.6 564.8 L499.0 567.0 M506.3 562.2 L506.9 562.8 L505.7 562.4 L502.1 561.6 L503.1 566.4 L501.9 567.8 L500.5 567.4 L499.9 569.6 M505.9 564.1 L505.3 563.6 L504.1 562.7 L502.6 563.4 L503.8 560.8 L501.9 560.8 L500.2 559.3 L498.7 563.9 M506.6 562.4 L505.0 563.4 L504.9 560.8 L501.8 562.1 L502.9 562.8 L503.5 557.7 L500.7 559.3 L499.0 558.3 M508.1 564.0 L506.5 560.8 L506.2 561.1 L508.9 560.8 L507.3 558.8 L508.9 556.3 L512.3 559.2 L512.9 555.0 M507.2 562.3 L507.4 562.4 L506.2 559.5 L508.8 558.5 L510.2 560.2 L511.5 558.5 L513.4 560.8 L510.0 555.8 M507.8 562.6 L506.8 562.5 L508.5 560.1 L511.0 560.2 L512.1 561.3 L509.8 557.9 L513.2 561.7 L508.4 553.1 M512.3 563.6 L513.6 567.2 L509.2 567.4 L508.1 571.9 L505.5 566.7 L502.2 568.7 L503.3 565.0 L499.0 563.6 L500.9 561.0 L502.1 558.5 L505.1 558.9 L507.7 557.3 L508.8 560.3 L511.5 561.0 Z M510.1 563.8 L510.8 566.8 L507.7 566.2 L505.3 567.3 L504.6 564.8 L503.2 562.3 L506.0 561.7 L507.9 559.9 L509.6 561.9 Z" fill="none" stroke="#5f9628" stroke-width="0.8" stroke-linejoin="round"/><path d="M502.6 589.4 L502.6 592.4 L501.0 595.0 L499.0 597.3 L496.2 598.2 L493.3 599.2 L490.5 598.1 L487.2 597.8 L486.1 594.6 L483.9 592.5 L484.3 589.4 L484.0 586.4 L485.5 583.7 L487.5 581.5 L490.4 580.5 L493.3 579.5 L496.2 580.4 L499.1 581.4 L500.5 584.1 L502.7 586.3 Z M494.0 589.6 L495.0 588.2 L495.0 589.0 L497.0 591.5 L498.5 591.4 L500.0 589.0 L501.0 584.5 L499.8 584.1 M493.1 589.2 L494.3 591.4 L494.9 591.9 L498.0 592.3 L495.3 592.9 L495.4 596.1 L497.0 594.3 L500.4 597.6 M493.9 588.9 L494.8 591.3 L492.5 590.3 L495.8 591.4 L496.5 592.4 L496.8 592.7 L500.5 595.1 L499.6 597.4 M492.9 590.3 L493.2 591.5 L492.5 592.6 L490.4 592.4 L496.1 593.6 L491.6 595.3 L494.6 597.6 L493.7 597.8 M493.7 590.6 L494.1 591.9 L490.9 590.7 L488.5 591.0 L488.2 591.1 L486.9 593.6 L485.6 590.4 L491.4 597.7 M493.8 589.6 L490.8 588.9 L489.2 588.8 L488.6 588.8 L487.6 590.5 L487.6 593.9 L486.5 592.4 L488.5 599.0 M493.9 588.7 L491.3 590.7 L491.1 588.0 L489.9 585.4 L490.8 586.3 L488.4 585.3 L487.2 586.1 L486.1 584.6 M492.5 588.2 L493.8 589.5 L491.7 586.0 L491.2 586.6 L489.7 586.5 L491.2 582.5 L492.3 581.7 L494.3 581.1 M493.6 589.3 L493.5 588.9 L493.7 585.8 L491.8 586.9 L492.5 584.5 L486.9 586.4 L487.9 583.6 L488.0 584.1 M492.5 589.3 L494.5 586.6 L493.1 585.4 L497.2 588.0 L497.5 585.8 L496.1 582.6 L498.6 583.9 L496.5 582.1 M494.2 588.2 L493.9 589.4 L494.2 588.7 L494.1 585.3 L497.1 586.8 L495.2 582.7 L496.6 582.2 L495.5 581.2 M497.8 589.3 L500.4 593.0 L496.6 594.0 L494.1 595.1 L491.4 595.2 L487.8 595.5 L489.3 591.0 L486.6 589.3 L488.6 587.3 L488.8 584.3 L491.9 585.3 L494.3 582.7 L495.8 585.5 L499.3 586.2 Z M493.7 589.2 L496.1 592.4 L492.6 590.4 L490.9 591.9 L490.8 589.8 L489.3 588.1 L491.0 586.9 L492.9 586.5 L494.7 587.3 Z" fill="none" stroke="#5f9628" stroke-width="0.8" stroke-linejoin="round"/></g><g stroke="#ff2020" stroke-opacity="0.8" stroke-width="1" fill="none"><path d="M419 538.5 H460 M439.5 518.4 V558.8"/><circle cx="439.5" cy="538.5" r="5.3"/></g></svg></div>
<div id="vscroll" class="abs"><div class="abs" style="left:5px;top:147px;width:8px;height:281px;border-radius:4px;background:#7f7f7f"></div></div>
<div id="hscroll" class="abs"><div class="abs" style="left:73px;top:5px;width:857px;height:8px;border-radius:4px;background:#7f7f7f"></div></div>
<div class="abs" style="left:1099px;top:732px;width:54.5px;height:17px;background:#ececec;font-size:13px;line-height:17px;text-align:right;color:#111;white-space:nowrap">1 &lt; 10</div>
<div id="cmdhist" class="abs"><span class="abs" style="left:5px;top:1.5px;font-size:13.4px;line-height:16px;color:#0000d0;white-space:nowrap"><i>Comando:</i> printpreview</span></div>
<div id="cmdline" class="abs"><span class="abs" style="left:1px;top:5.5px;font-size:13.3px;line-height:17px;color:#111">Comando:</span><div class="abs" style="left:66px;top:5px;width:989px;height:18px;background:#fff"></div><div class="abs" style="left:1055px;top:1.5px;width:27px;height:25px;background:linear-gradient(#fafafa,#e6e6e6);border:1px solid #b4b4b4"></div><svg width="30" height="27" style="left:1055px;top:1px"><rect x="6.5" y="7.5" width="14" height="11" fill="#fff" stroke="#222" stroke-width="1"/><rect x="6" y="7" width="15" height="3.6" fill="#111"/></svg></div>
<div id="status" class="abs"><span style="left:2px;top:8px">-3.8637,21.509</span><span style="left:2px;top:28px">@-3.8637,21.509</span><div class="abs" style="left:253px;top:3px;width:1px;height:41px;background:#8a8a8a"></div><span style="left:256px;top:8px">21.8533&lt;100°</span><span style="left:256px;top:28px">@21.8533&lt;100°</span><span style="left:949px;top:18px;font-size:9.3px;letter-spacing:0.42px">No hay entidades seleccionadas.</span><div class="abs" style="left:507px;top:21.5px;width:6px;height:6px;border-radius:3px;background:#c9c9c9"></div><div class="abs" style="left:940px;top:21.5px;width:6px;height:6px;border-radius:3px;background:#c9c9c9"></div><div class="abs" style="left:1269px;top:21.5px;width:6px;height:6px;border-radius:3px;background:#c9c9c9"></div><svg width="30" height="46" style="left:712px;top:0"><rect x="5.7" y="8.2" width="16.8" height="28.6" rx="8.4" fill="#fff" stroke="#333" stroke-width="1"/><path d="M5.7 21.6 H22.5" stroke="#333" stroke-width="0.9"/><rect x="12.3" y="9.6" width="3.6" height="9" rx="1.8" fill="#fff" stroke="#333" stroke-width="0.9"/></svg></div>
<div id="layers" class="abs">
<div class="abs" style="left:0;top:48px;width:1.2px;height:642px;background:#dadada"></div>
<div class="abs" style="left:0;top:0;width:298px;height:23px;background:linear-gradient(#ededed,#dedede);border-bottom:1px solid #c8c8c8;text-align:center;font-size:11.7px;line-height:21.6px;color:#222;letter-spacing:0.15px;padding-left:35px">Lista de capas</div>
<svg width="298" height="50"><circle cx="9" cy="10.2" r="6.9" fill="#4d4d4d"/><path d="M6.2 7.4 L11.8 13 M11.8 7.4 L6.2 13" stroke="#fff" stroke-width="1.9"/><circle cx="27" cy="10.2" r="6.9" fill="#4d4d4d"/><rect x="23" y="9.2" width="5.4" height="4.6" fill="#4d4d4d" stroke="#fff" stroke-width="1.3"/><path d="M25.4 8.8 V6.9 H30.9 V11.6 H28.8" fill="none" stroke="#fff" stroke-width="1.3"/></svg>
<div class="lbt" style="left:0.2px;width:60.4px"></div>
<div class="lbt" style="left:60.1px;width:60.4px"></div>
<div class="lbt" style="left:120.0px;width:60.4px"></div>
<div class="lbt" style="left:179.9px;width:60.4px"></div>
<div class="lbt" style="left:239.8px;width:60.4px"></div>
<svg width="298" height="200"><g transform="translate(30,35.2)" ><g opacity="1.0" transform="scale(0.9)"><path d="M-7.4 0.3 C-4.5 -5.3 4.5 -5.3 7.4 0.3 C4.5 5.2 -4.5 5.2 -7.4 0.3 Z" fill="#fff" stroke="#000" stroke-width="1.7"/><path d="M-7.6 -0.6 C-4.5 -6.3 4.5 -6.3 7.6 -0.6" fill="none" stroke="#000" stroke-width="2.2"/><circle cx="0" cy="0" r="3.4" fill="#000"/><circle cx="-0.9" cy="-1.1" r="1.1" fill="#fff"/></g></g><g transform="translate(90,35.2)" ><g opacity="0.4" transform="scale(0.9)"><path d="M-7.4 0.3 C-4.5 -5.3 4.5 -5.3 7.4 0.3 C4.5 5.2 -4.5 5.2 -7.4 0.3 Z" fill="#fff" stroke="#555" stroke-width="1.7"/><path d="M-7.6 -0.6 C-4.5 -6.3 4.5 -6.3 7.6 -0.6" fill="none" stroke="#555" stroke-width="2.2"/><circle cx="0" cy="0" r="3.4" fill="#555"/><circle cx="-0.9" cy="-1.1" r="1.1" fill="#fff"/></g></g><path d="M144 35.5 H156 M150 29.5 V41.5" stroke="#e00000" stroke-width="3"/><path d="M204 35.5 H216" stroke="#e00000" stroke-width="3"/><g transform="translate(270,35.5)" ><g transform="scale(1.15)"><g transform="rotate(50)"><rect x="-1.6" y="-9" width="3.2" height="13.5" fill="#f0a63a" stroke="#b06a14" stroke-width="0.5"/><rect x="-1.6" y="-10.2" width="3.2" height="2.4" fill="#e24a42"/><path d="M-1.6 4.5 L0 8.4 L1.6 4.5 Z" fill="#efd3a7" stroke="#8a6a3a" stroke-width="0.4"/><path d="M-0.6 7 L0 8.4 L0.6 7 Z" fill="#222"/></g></g></g><g transform="translate(268,59)" ><g opacity="1.0" transform="scale(0.9)"><path d="M-7.4 0.3 C-4.5 -5.3 4.5 -5.3 7.4 0.3 C4.5 5.2 -4.5 5.2 -7.4 0.3 Z" fill="#fff" stroke="#000" stroke-width="1.7"/><path d="M-7.6 -0.6 C-4.5 -6.3 4.5 -6.3 7.6 -0.6" fill="none" stroke="#000" stroke-width="2.2"/><circle cx="0" cy="0" r="3.4" fill="#000"/><circle cx="-0.9" cy="-1.1" r="1.1" fill="#fff"/></g></g><g transform="translate(290,58.5)" ><path d="M-3.2 -1 V-3.4 A3.2 3.4 0 0 1 3.2 -3.4 V-1" fill="none" stroke="#c2c2c2" stroke-width="1.5"/><rect x="-5" y="-1" width="10" height="7.4" fill="#b9b9b9"/></g><g transform="translate(268,79)" ><g opacity="1.0" transform="scale(0.9)"><path d="M-7.4 0.3 C-4.5 -5.3 4.5 -5.3 7.4 0.3 C4.5 5.2 -4.5 5.2 -7.4 0.3 Z" fill="#fff" stroke="#000" stroke-width="1.7"/><path d="M-7.6 -0.6 C-4.5 -6.3 4.5 -6.3 7.6 -0.6" fill="none" stroke="#000" stroke-width="2.2"/><circle cx="0" cy="0" r="3.4" fill="#000"/><circle cx="-0.9" cy="-1.1" r="1.1" fill="#fff"/></g></g><g transform="translate(290,78.5)" ><path d="M-3.2 -1 V-3.4 A3.2 3.4 0 0 1 3.2 -3.4 V-1" fill="none" stroke="#c2c2c2" stroke-width="1.5"/><rect x="-5" y="-1" width="10" height="7.4" fill="#b9b9b9"/></g><g transform="translate(268,99)" ><g opacity="1.0" transform="scale(0.9)"><path d="M-7.4 0.3 C-4.5 -5.3 4.5 -5.3 7.4 0.3 C4.5 5.2 -4.5 5.2 -7.4 0.3 Z" fill="#fff" stroke="#000" stroke-width="1.7"/><path d="M-7.6 -0.6 C-4.5 -6.3 4.5 -6.3 7.6 -0.6" fill="none" stroke="#000" stroke-width="2.2"/><circle cx="0" cy="0" r="3.4" fill="#000"/><circle cx="-0.9" cy="-1.1" r="1.1" fill="#fff"/></g></g><g transform="translate(290,98.5)" ><path d="M-3.2 -1 V-3.4 A3.2 3.4 0 0 1 3.2 -3.4 V-1" fill="none" stroke="#c2c2c2" stroke-width="1.5"/><rect x="-5" y="-1" width="10" height="7.4" fill="#b9b9b9"/></g><g transform="translate(268,119)" ><g opacity="1.0" transform="scale(0.9)"><path d="M-7.4 0.3 C-4.5 -5.3 4.5 -5.3 7.4 0.3 C4.5 5.2 -4.5 5.2 -7.4 0.3 Z" fill="#fff" stroke="#000" stroke-width="1.7"/><path d="M-7.6 -0.6 C-4.5 -6.3 4.5 -6.3 7.6 -0.6" fill="none" stroke="#000" stroke-width="2.2"/><circle cx="0" cy="0" r="3.4" fill="#000"/><circle cx="-0.9" cy="-1.1" r="1.1" fill="#fff"/></g></g><g transform="translate(290,118.5)" ><path d="M-3.2 -1 V-3.4 A3.2 3.4 0 0 1 3.2 -3.4 V-1" fill="none" stroke="#c2c2c2" stroke-width="1.5"/><rect x="-5" y="-1" width="10" height="7.4" fill="#b9b9b9"/></g><g transform="translate(268,139)" ><g opacity="1.0" transform="scale(0.9)"><path d="M-7.4 0.3 C-4.5 -5.3 4.5 -5.3 7.4 0.3 C4.5 5.2 -4.5 5.2 -7.4 0.3 Z" fill="#fff" stroke="#000" stroke-width="1.7"/><path d="M-7.6 -0.6 C-4.5 -6.3 4.5 -6.3 7.6 -0.6" fill="none" stroke="#000" stroke-width="2.2"/><circle cx="0" cy="0" r="3.4" fill="#000"/><circle cx="-0.9" cy="-1.1" r="1.1" fill="#fff"/></g></g><g transform="translate(290,138.5)" ><path d="M-3.2 -1 V-3.4 A3.2 3.4 0 0 1 3.2 -3.4 V-1" fill="none" stroke="#c2c2c2" stroke-width="1.5"/><rect x="-5" y="-1" width="10" height="7.4" fill="#b9b9b9"/></g><g transform="translate(268,159)" ><g opacity="1.0" transform="scale(0.9)"><path d="M-7.4 0.3 C-4.5 -5.3 4.5 -5.3 7.4 0.3 C4.5 5.2 -4.5 5.2 -7.4 0.3 Z" fill="#fff" stroke="#000" stroke-width="1.7"/><path d="M-7.6 -0.6 C-4.5 -6.3 4.5 -6.3 7.6 -0.6" fill="none" stroke="#000" stroke-width="2.2"/><circle cx="0" cy="0" r="3.4" fill="#000"/><circle cx="-0.9" cy="-1.1" r="1.1" fill="#fff"/></g></g><g transform="translate(290,158.5)" ><path d="M-3.2 -1 V-3.4 A3.2 3.4 0 0 1 3.2 -3.4 V-1" fill="none" stroke="#c2c2c2" stroke-width="1.5"/><rect x="-5" y="-1" width="10" height="7.4" fill="#b9b9b9"/></g><g transform="translate(246,79)" ><g transform="rotate(50)"><rect x="-1.6" y="-9" width="3.2" height="13.5" fill="#f0a63a" stroke="#b06a14" stroke-width="0.5"/><rect x="-1.6" y="-10.2" width="3.2" height="2.4" fill="#e24a42"/><path d="M-1.6 4.5 L0 8.4 L1.6 4.5 Z" fill="#efd3a7" stroke="#8a6a3a" stroke-width="0.4"/><path d="M-0.6 7 L0 8.4 L0.6 7 Z" fill="#222"/></g></g></svg>
<div class="lrow" style="top:49px"><i style="background:#ffffff"></i><b>0</b></div>
<div class="lrow" style="top:69px"><i style="background:#000000"></i><b>Borde</b></div>
<div class="lrow" style="top:89px"><i style="background:#d1a75d"></i><b>Caminos</b></div>
<div class="lrow" style="top:109px"><i style="background:#c6c6c6"></i><b>Instalaciones</b></div>
<div class="lrow" style="top:129px"><i style="background:#689f2d"></i><b>Plantas</b></div>
<div class="lrow" style="top:149px"><i style="background:#000000"></i><b>Título</b></div>
</div>
<div id="rightdock" class="abs">
<svg width="45" height="14" style="left:0;top:0"><path d="M7.5 9 H36" stroke="#a6a6a6" stroke-width="1.4" stroke-dasharray="1.4 4.6"/></svg>
<div class="hl" style="left:1.5px;top:12px;width:46px;height:42px;border-radius:6px"></div>
<div class="hl" style="left:2px;top:309px;width:46px;height:43px;border-radius:6px"></div>
<div class="abs" style="left:3px;top:154px;width:42px;height:0;border-top:1px dotted #777"></div>
<div class="abs" style="left:3px;top:301px;width:42px;height:0;border-top:1px dotted #777"></div>
<svg width="45" height="690"><g transform="translate(22,33)" ><rect x="-14" y="-14" width="28" height="28" fill="#fff" stroke="#333" stroke-width="0.8"/><rect x="-14" y="-14" width="28" height="4.6" fill="#000"/><rect x="-13.2" y="-13.4" width="2.8" height="3" fill="#fff"/><path d="M-6.5 -1 L-1 -3.5 V8 L-6.5 10.5 Z" fill="#d9d9d9" stroke="#555" stroke-width="0.7"/><path d="M-3.5 -2.5 L2 -5 V6.5 L-3.5 9 Z" fill="#e9e9e9" stroke="#555" stroke-width="0.7"/><path d="M-0.5 -4 L6 -7 V4.5 L-0.5 7.5 Z" fill="#f6f6f6" stroke="#555" stroke-width="0.7"/><path d="M1 5 L4.5 -3.5 L5 3 Z" fill="none" stroke="#e33" stroke-width="0.7"/></g><g transform="translate(22,80)" ><rect x="-14" y="-14" width="28" height="28" fill="#fff" stroke="#333" stroke-width="0.8"/><rect x="-14" y="-14" width="28" height="4.6" fill="#000"/><rect x="-13.2" y="-13.4" width="2.8" height="3" fill="#fff"/><rect x="-7" y="-6" width="10" height="7.5" fill="#efe3a8" stroke="#666" stroke-width="0.8"/><circle cx="2.3" cy="2.3" r="4.6" fill="#efe3a8" fill-opacity="0.85" stroke="#666" stroke-width="0.8"/></g><g transform="translate(22,126)" ><rect x="-14" y="-14" width="28" height="28" fill="#fff" stroke="#333" stroke-width="0.8"/><rect x="-14" y="-14" width="28" height="4.6" fill="#000"/><rect x="-13.2" y="-13.4" width="2.8" height="3" fill="#fff"/><rect x="-8" y="-4.5" width="16" height="11.5" rx="2.5" fill="#f4f2ee" stroke="#b9cbe6" stroke-width="1"/></g><g transform="translate(22,182)" ><rect x="-14" y="-14" width="28" height="28" fill="#fff" stroke="#333" stroke-width="0.8"/><rect x="-14" y="-14" width="28" height="4.6" fill="#000"/><rect x="-13.2" y="-13.4" width="2.8" height="3" fill="#fff"/><rect x="-10.5" y="-5.2" width="3.6" height="3" fill="#000"/><rect x="-4" y="-5.2" width="14" height="3" fill="#fff" stroke="#333" stroke-width="0.6"/><rect x="-10.5" y="0.4" width="3.6" height="3" fill="#000"/><rect x="-4" y="0.4" width="14" height="3" fill="#fff" stroke="#333" stroke-width="0.6"/><rect x="-10.5" y="6.0" width="3.6" height="3" fill="#000"/><rect x="-4" y="6.0" width="14" height="3" fill="#fff" stroke="#333" stroke-width="0.6"/></g><g transform="translate(22,228)" ><rect x="-14" y="-14" width="28" height="28" fill="#fff" stroke="#333" stroke-width="0.8"/><rect x="-14" y="-14" width="28" height="4.6" fill="#000"/><rect x="-13.2" y="-13.4" width="2.8" height="3" fill="#fff"/><ellipse cx="0" cy="-4.2" rx="6.8" ry="1.7" fill="#777" stroke="#444" stroke-width="0.5"/><path d="M-6.8 -4 L-1.2 1.8 V7.5 L1.6 9 V1.8 L6.8 -4 Z" fill="#9a9a9a" stroke="#555" stroke-width="0.6"/></g><g transform="translate(22,274)" ><rect x="-14" y="-14" width="28" height="28" fill="#fff" stroke="#333" stroke-width="0.8"/><rect x="-14" y="-14" width="28" height="4.6" fill="#000"/><rect x="-13.2" y="-13.4" width="2.8" height="3" fill="#fff"/><path d="M-8 -6.5 L-3.5 -3.3 V4 L-8 7 Z" fill="#fafafa" stroke="#555" stroke-width="0.8"/><rect x="-3.5" y="-3.3" width="10.5" height="7.3" rx="1" fill="#aaa" stroke="#666" stroke-width="0.6"/><path d="M1 -3 V3.8 M3 -3 V3.8 M5 -3 V3.8" stroke="#888" stroke-width="0.6"/><path d="M-10.5 0.4 H9.5" stroke="#f08a8a" stroke-width="0.8" stroke-dasharray="2.4 1.2"/></g><g transform="translate(22,330)" ><rect x="-14" y="-14" width="28" height="28" fill="#fff" stroke="#333" stroke-width="0.8"/><rect x="-14" y="-14" width="28" height="4.6" fill="#000"/><rect x="-13.2" y="-13.4" width="2.8" height="3" fill="#fff"/><path d="M-11.5 -5.5 H-1 M-11.5 -2.8 H-2 M-11.5 -0.1 H1.5 M-11.5 2.6 H3" stroke="#777" stroke-width="1" stroke-dasharray="1.6 0.5 3 0.5"/><path d="M-14 8.6 H14" stroke="#555" stroke-width="0.6"/><path d="M-12 11.3 H-10 M-5 11.3 H12.5" stroke="#666" stroke-width="1.3" stroke-dasharray="2 0.4"/></g><g transform="translate(22,377)" ><rect x="-14" y="-14" width="28" height="28" fill="#fff" stroke="#333" stroke-width="0.8"/><rect x="-14" y="-14" width="28" height="4.6" fill="#000"/><rect x="-13.2" y="-13.4" width="2.8" height="3" fill="#fff"/><rect x="-7" y="-5.5" width="13" height="16" rx="1.3" fill="#b5813d" stroke="#7d5520" stroke-width="0.7"/><rect x="-5" y="-3.6" width="9" height="12.4" fill="#f2f2f2"/><path d="M-3.5 -0.5 H2.5 M-3.5 1.6 H2.5 M-3.5 3.7 H2.5 M-3.5 5.8 H1" stroke="#bbb" stroke-width="0.7"/><path d="M-3.5 -3.8 V-5.8 H-1.6 V-7.4 H0.6 V-5.8 H2.5 V-3.8 Z" fill="#999" stroke="#666" stroke-width="0.5"/><path d="M4 5.8 V8.8 H1 Z" fill="#888"/></g></svg>
</div>
<div class="abs" style="left:535.5px;top:70px;width:42.5px;height:36.5px;background:rgba(255,60,60,0.22)"></div>
<svg width="1500" height="160"><path d="M524 70 H588 M524 106.3 H588 M535.5 62 V114 M578 62 V114" stroke="rgba(255,40,40,0.55)" stroke-width="1.2"/><g transform="translate(557,88)" ><rect x="-11.7" y="-13.7" width="23.4" height="27.2" rx="1" fill="#f6c4c4" stroke="#555" stroke-width="1"/><rect x="-4.3" y="-6.4" width="8.8" height="12.4" fill="none" stroke="#5a3fe0" stroke-width="1.5"/><path d="M-2.2 -10.6 H2.2 L0 -8.2 Z M-2.2 10.2 H2.2 L0 7.8 Z M-8.8 -2.4 V2 L-6.3 -0.2 Z M8.8 -2.4 V2 L6.3 -0.2 Z" fill="#ff1010"/></g><circle cx="566.8" cy="96.2" r="36" fill="rgba(190,205,225,0.07)" stroke="rgba(100,140,190,0.26)" stroke-width="6" style="filter:blur(0.7px)"/></svg>
<div class="abs" style="left:552px;top:124px;width:139px;height:23.5px;background:linear-gradient(#f4f7fb,#dfe7f0);border:1px solid #a9b4c0;border-radius:2px;box-shadow:1.5px 2px 3px rgba(0,0,0,.35);font-size:14.2px;line-height:21px;padding-left:4.5px;color:#000;white-space:nowrap">Centrado automático</div>
<svg width="1500" height="160"><g transform="translate(567.7,98.3)" ><path transform="scale(1.15)" d="M0 0 L0 16.5 L3.8 13 L6.6 19.3 L9.2 18.1 L6.4 12 L11.6 12 Z" fill="#000" stroke="#fff" stroke-width="3.3" stroke-linejoin="round" paint-order="stroke"/></g></svg>
</div></body></html>
